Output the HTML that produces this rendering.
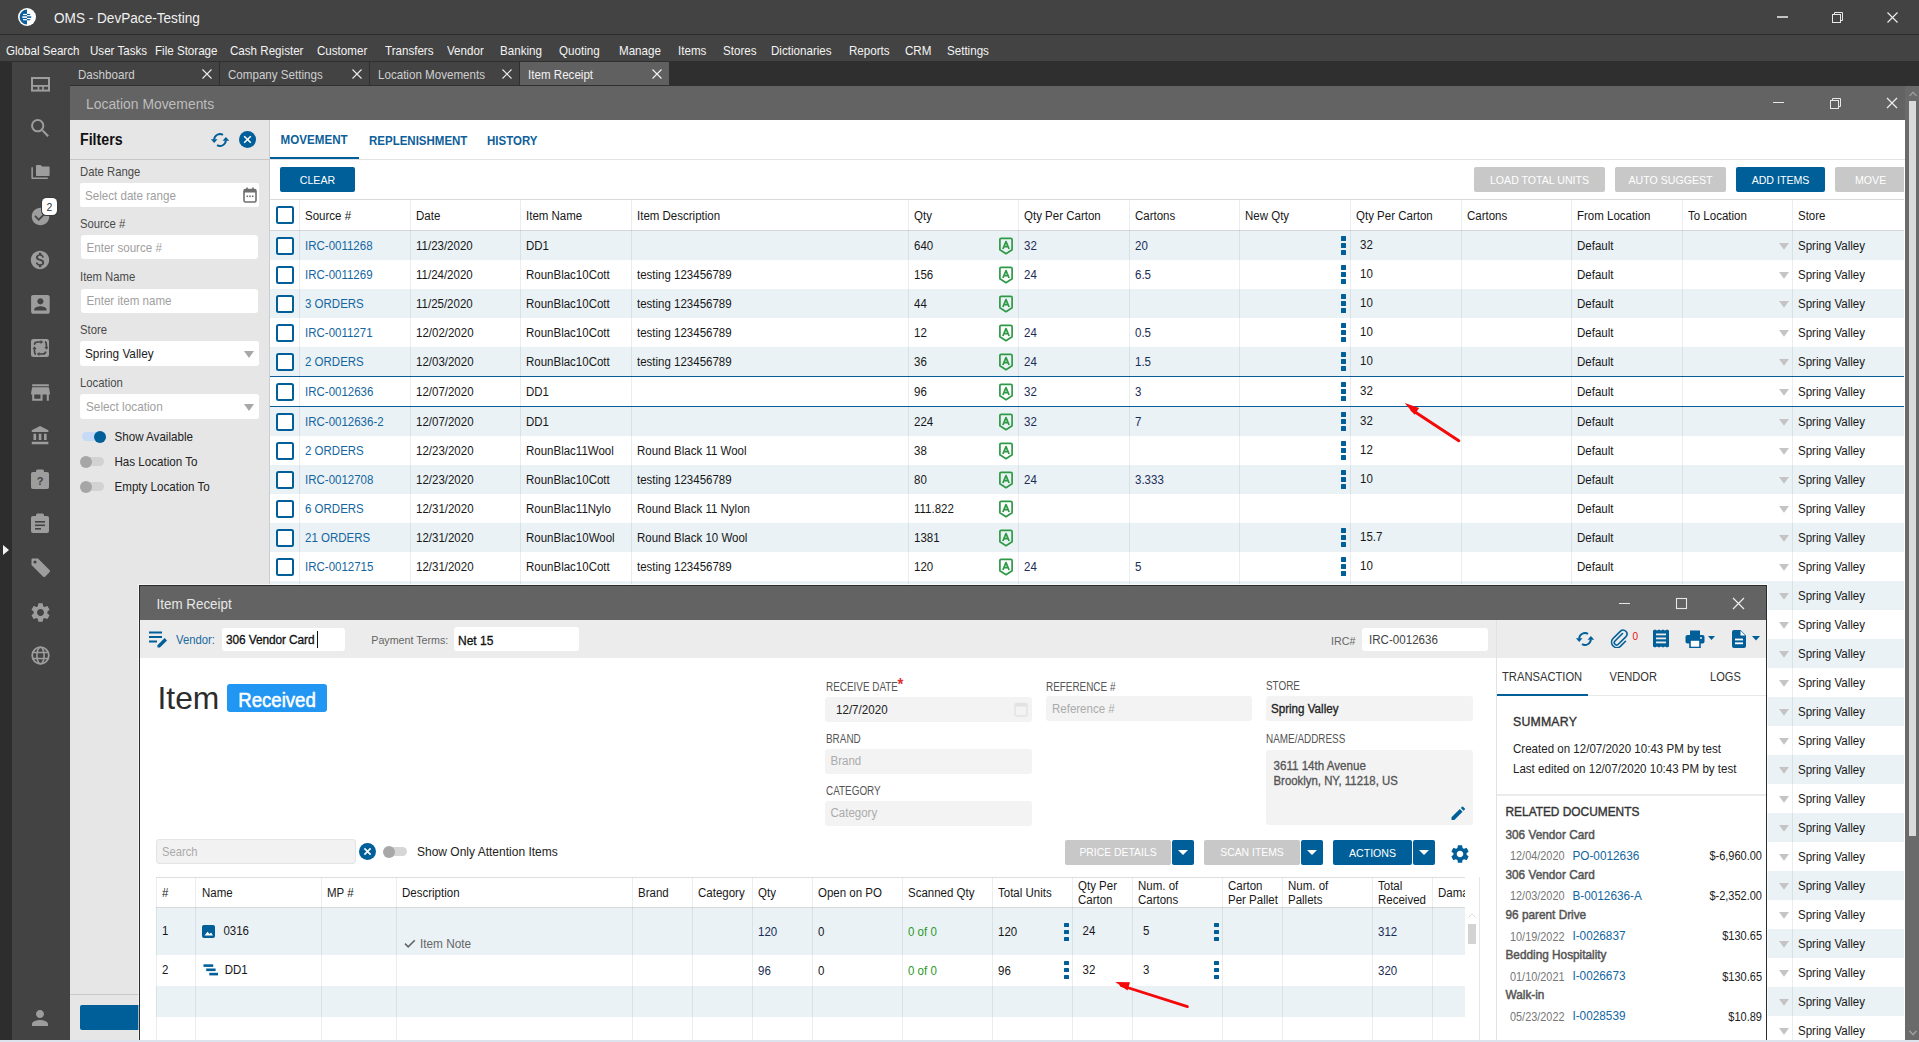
<!DOCTYPE html>
<html><head><meta charset="utf-8"><style>
html,body{margin:0;padding:0;}
body{width:1919px;height:1042px;position:relative;overflow:hidden;background:#2f2f2f;font-family:"Liberation Sans",sans-serif;}
body div{position:absolute;}
.t{white-space:nowrap;}
</style></head><body>
<div style="left:0px;top:0px;width:1919px;height:34px;background:#434343;"></div>
<div style="left:0px;top:34px;width:1919px;height:1px;background:#2c2c2c;"></div>
<div style="left:0px;top:35px;width:1919px;height:26px;background:#434343;"></div>
<div style="left:0px;top:61px;width:1919px;height:1px;background:#2f2f2f;"></div>
<svg style="position:absolute;left:18px;top:8px;" width="18" height="18" viewBox="0 0 18 18"><circle cx="9" cy="9" r="9" fill="#fff"/><path d="M9 1.6A7.4 7.4 0 0 0 9 16.4Z" fill="#0a5f9c"/><rect x="5" y="5.9" width="4" height="1.2" fill="#fff"/><rect x="4.3" y="8.3" width="4.7" height="1.6" fill="#fff"/><rect x="5" y="11.1" width="4" height="1.2" fill="#fff"/><rect x="9" y="5.9" width="3.2" height="1.2" fill="#0a5f9c"/><rect x="9" y="8.3" width="4.2" height="1.6" fill="#0a5f9c"/><rect x="9" y="11.1" width="3.2" height="1.2" fill="#0a5f9c"/></svg>
<div class="t" style="left:54px;top:12.09px;font-size:13.6px;line-height:13.6px;color:#f0f0f0;font-weight:400;transform:scaleY(1.1);transform-origin:0 11.51px;">OMS - DevPace-Testing</div>
<div style="left:1777px;top:16px;width:11px;height:2px;background:#c4c4c4;"></div>
<svg style="position:absolute;left:1831px;top:11px;" width="13" height="13" viewBox="0 0 13 13"><rect x="1.5" y="3.5" width="8" height="8" fill="none" stroke="#e8e8e8"/><path d="M3.5 3.5V1.5H11.5V9.5H9.5" fill="none" stroke="#e8e8e8"/></svg>
<svg style="position:absolute;left:1887px;top:12px;" width="11" height="11" viewBox="0 0 11 11"><path d="M0.5 0.5L10.5 10.5M10.5 0.5L0.5 10.5" stroke="#f0f0f0" stroke-width="1.1"/></svg>
<div class="t" style="left:6px;top:45.18px;font-size:11.6px;line-height:11.6px;color:#f4f4f4;font-weight:400;transform:scaleY(1.1);transform-origin:0 9.82px;">Global Search</div>
<div class="t" style="left:90px;top:45.18px;font-size:11.6px;line-height:11.6px;color:#f4f4f4;font-weight:400;transform:scaleY(1.1);transform-origin:0 9.82px;">User Tasks</div>
<div class="t" style="left:155px;top:45.18px;font-size:11.6px;line-height:11.6px;color:#f4f4f4;font-weight:400;transform:scaleY(1.1);transform-origin:0 9.82px;">File Storage</div>
<div class="t" style="left:230px;top:45.18px;font-size:11.6px;line-height:11.6px;color:#f4f4f4;font-weight:400;transform:scaleY(1.1);transform-origin:0 9.82px;">Cash Register</div>
<div class="t" style="left:317px;top:45.18px;font-size:11.6px;line-height:11.6px;color:#f4f4f4;font-weight:400;transform:scaleY(1.1);transform-origin:0 9.82px;">Customer</div>
<div class="t" style="left:385px;top:45.18px;font-size:11.6px;line-height:11.6px;color:#f4f4f4;font-weight:400;transform:scaleY(1.1);transform-origin:0 9.82px;">Transfers</div>
<div class="t" style="left:447px;top:45.18px;font-size:11.6px;line-height:11.6px;color:#f4f4f4;font-weight:400;transform:scaleY(1.1);transform-origin:0 9.82px;">Vendor</div>
<div class="t" style="left:500px;top:45.18px;font-size:11.6px;line-height:11.6px;color:#f4f4f4;font-weight:400;transform:scaleY(1.1);transform-origin:0 9.82px;">Banking</div>
<div class="t" style="left:559px;top:45.18px;font-size:11.6px;line-height:11.6px;color:#f4f4f4;font-weight:400;transform:scaleY(1.1);transform-origin:0 9.82px;">Quoting</div>
<div class="t" style="left:619px;top:45.18px;font-size:11.6px;line-height:11.6px;color:#f4f4f4;font-weight:400;transform:scaleY(1.1);transform-origin:0 9.82px;">Manage</div>
<div class="t" style="left:678px;top:45.18px;font-size:11.6px;line-height:11.6px;color:#f4f4f4;font-weight:400;transform:scaleY(1.1);transform-origin:0 9.82px;">Items</div>
<div class="t" style="left:723px;top:45.18px;font-size:11.6px;line-height:11.6px;color:#f4f4f4;font-weight:400;transform:scaleY(1.1);transform-origin:0 9.82px;">Stores</div>
<div class="t" style="left:771px;top:45.18px;font-size:11.6px;line-height:11.6px;color:#f4f4f4;font-weight:400;transform:scaleY(1.1);transform-origin:0 9.82px;">Dictionaries</div>
<div class="t" style="left:849px;top:45.18px;font-size:11.6px;line-height:11.6px;color:#f4f4f4;font-weight:400;transform:scaleY(1.1);transform-origin:0 9.82px;">Reports</div>
<div class="t" style="left:905px;top:45.18px;font-size:11.6px;line-height:11.6px;color:#f4f4f4;font-weight:400;transform:scaleY(1.1);transform-origin:0 9.82px;">CRM</div>
<div class="t" style="left:947px;top:45.18px;font-size:11.6px;line-height:11.6px;color:#f4f4f4;font-weight:400;transform:scaleY(1.1);transform-origin:0 9.82px;">Settings</div>
<div style="left:0px;top:62px;width:12px;height:978px;background:#2d2d2d;"></div>
<div style="left:12px;top:62px;width:58px;height:978px;background:#434343;"></div>
<svg style="position:absolute;left:3px;top:545px;" width="6" height="10" viewBox="0 0 6 10"><path d="M0 0L6 5L0 10Z" fill="#f2f2f2"/></svg>
<svg style="position:absolute;left:31px;top:77px;" width="19" height="15" viewBox="0 0 19 15"><rect x="1" y="1" width="17" height="12.6" fill="none" stroke="#9d9d9d" stroke-width="2"/><rect x="1" y="8" width="17" height="1.8" fill="#9d9d9d"/><rect x="6.6" y="8" width="1.7" height="6" fill="#9d9d9d"/><rect x="11.2" y="8" width="1.7" height="6" fill="#9d9d9d"/></svg>
<svg style="position:absolute;left:28.4px;top:115.7px;" width="24.5" height="24.5" viewBox="0 0 24 24"><path d="M15.5 14h-.79l-.28-.27A6.471 6.471 0 0 0 16 9.5 6.5 6.5 0 1 0 9.5 16c1.61 0 3.09-.59 4.23-1.57l.27.28v.79l5 4.99L20.49 19l-4.99-5zm-6 0C7.01 14 5 11.99 5 9.5S7.01 5 9.5 5 14 7.01 14 9.5 11.99 14 9.5 14z" fill="#9d9d9d"/></svg>
<svg style="position:absolute;left:31px;top:164px;" width="19" height="16" viewBox="0 0 19 16"><path d="M5.8 1H9.6L11.1 2.5H17.8Q18.6 2.5 18.6 3.3V11.2Q18.6 12 17.8 12H5.8Q5 12 5 11.2V1.8Q5 1 5.8 1Z" fill="#9d9d9d"/><path d="M0.4 3.2H1.9V13.5H16.8V15H1.2Q0.4 15 0.4 14.2Z" fill="#9d9d9d"/></svg>
<svg style="position:absolute;left:29.5px;top:205.5px;" width="21" height="21" viewBox="0 0 24 24"><path d="M12 2C6.48 2 2 6.48 2 12s4.48 10 10 10 10-4.48 10-10S17.52 2 12 2zm-2 15l-5-5 1.41-1.41L10 14.17l7.59-7.59L19 8l-9 9z" fill="#9d9d9d"/></svg>
<div style="left:42px;top:198px;width:15px;height:17px;background:#fff;border-radius:4.5px;box-shadow:0 0 0 1px #3a3a3a;"></div>
<div class="t" style="left:-150.5px;width:400px;text-align:center;top:201.61px;font-size:10.5px;line-height:10.5px;color:#333;font-weight:400;transform:scaleY(1.1);transform-origin:0 8.89px;">2</div>
<svg style="position:absolute;left:29.0px;top:249.0px;" width="22" height="22" viewBox="0 0 24 24"><path d="M12 2C6.48 2 2 6.48 2 12s4.48 10 10 10 10-4.48 10-10S17.52 2 12 2zm1.41 16.09V20h-2.67v-1.93c-1.71-.36-3.16-1.46-3.27-3.4h1.96c.1 1.05.82 1.87 2.65 1.870 1.96 0 2.4-.98 2.4-1.59 0-.83-.44-1.61-2.67-2.14-2.48-.6-4.18-1.62-4.18-3.670 0-1.72 1.39-2.84 3.11-3.21V4h2.67v1.95c1.86.45 2.790 1.86 2.85 3.39H14.3c-.05-1.11-.64-1.87-2.22-1.870-1.5 0-2.4.68-2.4 1.64 0 .84.65 1.390 2.67 1.91s4.18 1.39 4.18 3.91c-.01 1.83-1.38 2.83-3.12 3.16z" fill="#9d9d9d"/></svg>
<svg style="position:absolute;left:27.6px;top:291.6px;" width="24.8" height="24.8" viewBox="0 0 24 24"><path d="M3 5v14c0 1.1.89 2 2 2h14c1.1 0 2-.9 2-2V5c0-1.1-.9-2-2-2H5c-1.11 0-2 .9-2 2zm12 4c0 1.66-1.34 3-3 3s-3-1.34-3-3 1.34-3 3-3 3 1.34 3 3zm-9 8c0-2 4-3.1 6-3.1s6 1.1 6 3.1v1H6v-1z" fill="#9d9d9d"/></svg>
<svg style="position:absolute;left:31px;top:339px;" width="18" height="18" viewBox="0 0 18 18"><rect x="0" y="0" width="18" height="18" rx="2.5" fill="#9d9d9d"/><g fill="none" stroke="#434343" stroke-width="1.7"><path d="M3.5 5.8Q3.5 3 6.5 3H9.8"/><path d="M14 2.6Q15.4 3.2 15.4 6V8.2"/><path d="M14.6 12.5Q14.6 15 11.6 15H8.3"/><path d="M4.8 15.4Q3.5 14.8 3.5 12V9.8"/></g><g fill="#434343"><path d="M9.5 1L9.5 5L12.3 3Z"/><path d="M13.4 8L17.4 8L15.4 10.8Z"/><path d="M8.5 13L8.5 17L5.7 15Z"/><path d="M1.5 10L5.5 10L3.5 7.2Z"/></g></svg>
<svg style="position:absolute;left:27.5px;top:379.5px;" width="25" height="25" viewBox="0 0 24 24"><path d="M20 4H4v2h16V4zm1 10v-2l-1-5H4l-1 5v2h1v6h10v-6h4v6h2v-6h1zm-9 4H6v-4h6v4z" fill="#9d9d9d"/></svg>
<svg style="position:absolute;left:29.5px;top:424.5px;" width="21" height="21" viewBox="0 0 24 24"><path d="M4 10v7h3v-7H4zm6 0v7h3v-7h-3zM2 22h19v-3H2v3zm14-12v7h3v-7h-3zm-4.5-9L2 6v2h19V6l-9.5-5z" fill="#9d9d9d"/></svg>
<svg style="position:absolute;left:31px;top:469px;" width="18" height="20" viewBox="0 0 18 20"><rect x="0" y="3" width="18" height="17" rx="2" fill="#9d9d9d"/><rect x="5" y="0.5" width="8" height="5" rx="1.5" fill="#9d9d9d"/><text x="9" y="16" font-size="11" font-weight="bold" text-anchor="middle" fill="#434343" font-family="Liberation Sans">?</text></svg>
<svg style="position:absolute;left:31px;top:513px;" width="18" height="20" viewBox="0 0 18 20"><rect x="0" y="3" width="18" height="17" rx="2" fill="#9d9d9d"/><rect x="5" y="0.5" width="8" height="5" rx="1.5" fill="#9d9d9d"/><rect x="4" y="8" width="10" height="1.6" fill="#434343"/><rect x="4" y="11.5" width="10" height="1.6" fill="#434343"/><rect x="4" y="15" width="6" height="1.6" fill="#434343"/></svg>
<svg style="position:absolute;left:30px;top:557px;" width="21" height="21" viewBox="0 0 21 21"><path d="M8 1.5L19.5 13c.7.7.7 1.6 0 2.3l-4.2 4.2c-.7.7-1.6.7-2.3 0L1.5 8V2.5c0-.6.4-1 1-1z" fill="#9d9d9d"/><circle cx="5" cy="5" r="1.6" fill="#434343"/></svg>
<svg style="position:absolute;left:28.5px;top:600.5px;" width="23" height="23" viewBox="0 0 24 24"><path d="M19.14 12.94c.04-.3.06-.61.06-.94 0-.32-.02-.64-.07-.94l2.03-1.58c.18-.14.23-.41.12-.61l-1.92-3.32c-.12-.22-.37-.29-.59-.22l-2.39.96c-.5-.38-1.03-.7-1.62-.94l-.36-2.540c-.04-.24-.24-.41-.48-.41h-3.84c-.24 0-.43.17-.47.41l-.36 2.54c-.59.24-1.13.57-1.62.94l-2.39-.96c-.22-.08-.47 0-.59.22L2.74 8.870c-.12.21-.08.47.12.61l2.03 1.58c-.05.3-.09.63-.09.94s.02.64.07.94l-2.03 1.58c-.18.14-.23.41-.12.61l1.920 3.32c.12.22.37.29.59.22l2.39-.96c.5.38 1.03.7 1.62.94l.36 2.54c.05.24.24.41.48.41h3.84c.24 0 .44-.17.47-.41l.36-2.54c.59-.24 1.13-.56 1.62-.94l2.39.96c.22.08.47 0 .59-.22l1.92-3.32c.12-.22.07-.47-.12-.61l-2.01-1.58zM12 15.6c-1.98 0-3.6-1.62-3.6-3.6s1.62-3.6 3.6-3.6 3.6 1.62 3.6 3.6-1.62 3.6-3.6 3.6z" fill="#9d9d9d"/></svg>
<svg style="position:absolute;left:31px;top:646px;" width="19" height="19" viewBox="0 0 19 19"><circle cx="9.5" cy="9.5" r="8.3" fill="none" stroke="#9d9d9d" stroke-width="1.8"/><ellipse cx="9.5" cy="9.5" rx="3.6" ry="8.3" fill="none" stroke="#9d9d9d" stroke-width="1.6"/><path d="M1.5 6.5h16M1.5 12.5h16" stroke="#9d9d9d" stroke-width="1.6"/></svg>
<svg style="position:absolute;left:28.0px;top:1005.5px;" width="24" height="24" viewBox="0 0 24 24"><path d="M12 12c2.21 0 4-1.79 4-4s-1.79-4-4-4-4 1.79-4 4 1.790 4 4 4zm0 2c-2.67 0-8 1.34-8 4v2h16v-2c0-2.66-5.33-4-8-4z" fill="#9d9d9d"/></svg>
<div style="left:70px;top:62px;width:1849px;height:23px;background:#2f2f2f;"></div>
<div style="left:70px;top:62px;width:149px;height:23px;background:#434343;"></div>
<div class="t" style="left:78px;top:69.18px;font-size:11.6px;line-height:11.6px;color:#cfcfcf;font-weight:400;transform:scaleY(1.1);transform-origin:0 9.82px;">Dashboard</div>
<svg style="position:absolute;left:202px;top:69px;" width="10" height="10" viewBox="0 0 10 10"><path d="M0.5 0.5L9.5 9.5M9.5 0.5L0.5 9.5" stroke="#ececec" stroke-width="1.1"/></svg>
<div style="left:220px;top:62px;width:149px;height:23px;background:#434343;"></div>
<div class="t" style="left:228px;top:69.18px;font-size:11.6px;line-height:11.6px;color:#cfcfcf;font-weight:400;transform:scaleY(1.1);transform-origin:0 9.82px;">Company Settings</div>
<svg style="position:absolute;left:352px;top:69px;" width="10" height="10" viewBox="0 0 10 10"><path d="M0.5 0.5L9.5 9.5M9.5 0.5L0.5 9.5" stroke="#ececec" stroke-width="1.1"/></svg>
<div style="left:370px;top:62px;width:149px;height:23px;background:#434343;"></div>
<div class="t" style="left:378px;top:69.18px;font-size:11.6px;line-height:11.6px;color:#cfcfcf;font-weight:400;transform:scaleY(1.1);transform-origin:0 9.82px;">Location Movements</div>
<svg style="position:absolute;left:502px;top:69px;" width="10" height="10" viewBox="0 0 10 10"><path d="M0.5 0.5L9.5 9.5M9.5 0.5L0.5 9.5" stroke="#ececec" stroke-width="1.1"/></svg>
<div style="left:520px;top:62px;width:149px;height:23px;background:#606060;"></div>
<div class="t" style="left:528px;top:69.18px;font-size:11.6px;line-height:11.6px;color:#f2f2f2;font-weight:400;transform:scaleY(1.1);transform-origin:0 9.82px;">Item Receipt</div>
<svg style="position:absolute;left:652px;top:69px;" width="10" height="10" viewBox="0 0 10 10"><path d="M0.5 0.5L9.5 9.5M9.5 0.5L0.5 9.5" stroke="#f4f4f4" stroke-width="1.1"/></svg>
<div style="left:70px;top:85px;width:1849px;height:1px;background:#2f2f2f;"></div>
<div style="left:70px;top:86px;width:1835px;height:34px;background:#636363;"></div>
<div class="t" style="left:86px;top:97.73px;font-size:13.9px;line-height:13.9px;color:#bdbdbd;font-weight:400;transform:scaleY(1.1);transform-origin:0 11.77px;">Location Movements</div>
<div style="left:1773px;top:102px;width:11px;height:1px;background:#e8e8e8;"></div>
<svg style="position:absolute;left:1829px;top:97px;" width="13" height="13" viewBox="0 0 13 13"><rect x="1.5" y="3.5" width="8" height="8" fill="none" stroke="#e8e8e8"/><path d="M3.5 3.5V1.5H11.5V9.5H9.5" fill="none" stroke="#e8e8e8"/></svg>
<svg style="position:absolute;left:1886px;top:97px;" width="12" height="12" viewBox="0 0 12 12"><path d="M1 1L11 11M11 1L1 11" stroke="#f0f0f0" stroke-width="1.2"/></svg>
<div style="left:1905px;top:86px;width:14px;height:954px;background:#6a6a6a;"></div>
<div style="left:1909px;top:101px;width:7px;height:735px;background:#dadada;"></div>
<svg style="position:absolute;left:1908.5px;top:90.5px;" width="8" height="6" viewBox="0 0 8 6"><path d="M0.5 5L4 1.2L7.5 5" fill="none" stroke="#9c9c9c" stroke-width="1.3"/></svg>
<svg style="position:absolute;left:1908.5px;top:1029.5px;" width="8" height="6" viewBox="0 0 8 6"><path d="M0.5 0.8L4 4.6L7.5 0.8" fill="none" stroke="#a0a0a0" stroke-width="1.4"/></svg>
<div style="left:0px;top:1040px;width:1919px;height:2px;background:#dde3ec;"></div>
<div style="left:70px;top:120px;width:199px;height:920px;background:#e6e6e6;"></div>
<div style="left:269px;top:120px;width:1px;height:920px;background:#cdcdcd;"></div>
<div class="t" style="left:80px;top:132.98px;font-size:14.2px;line-height:14.2px;color:#111;font-weight:700;transform:scaleY(1.1);transform-origin:0 12.02px;">Filters</div>
<svg style="position:absolute;left:209.5px;top:129.5px;" width="20" height="20" viewBox="0 0 20 20"><path d="M13 4.8A6 6 0 0 0 4.1 9.6" fill="none" stroke="#005f99" stroke-width="1.9"/><path d="M0.9 9.3H7.5L4.2 12.9Z" fill="#005f99"/><path d="M7 15.2A6 6 0 0 0 15.9 10.4" fill="none" stroke="#005f99" stroke-width="1.9"/><path d="M12.6 10.7H19.2L15.9 7.1Z" fill="#005f99"/></svg>
<svg style="position:absolute;left:239px;top:131px;" width="17" height="17" viewBox="0 0 17 17"><circle cx="8.5" cy="8.5" r="8.5" fill="#005f99"/><path d="M5.2 5.2L11.8 11.8M11.8 5.2L5.2 11.8" stroke="#fff" stroke-width="1.6"/></svg>
<div style="left:70px;top:159px;width:199px;height:1px;background:#c6c6c6;"></div>
<div class="t" style="left:80px;top:166.83px;font-size:11.3px;line-height:11.3px;color:#4a4a4a;font-weight:400;transform:scaleY(1.1);transform-origin:0 9.57px;">Date Range</div>
<div style="left:80px;top:183px;width:179px;height:24px;background:#fff;border-radius:2px;"></div>
<div class="t" style="left:85px;top:190.18px;font-size:11.6px;line-height:11.6px;color:#a0a0a0;font-weight:400;transform:scaleY(1.1);transform-origin:0 9.82px;">Select date range</div>
<svg style="position:absolute;left:243px;top:187px;" width="14" height="16" viewBox="0 0 14 16"><rect x="1" y="2.5" width="12" height="12.5" rx="1.5" fill="none" stroke="#6f6f6f" stroke-width="1.6"/><rect x="1" y="2.5" width="12" height="3" fill="#6f6f6f"/><rect x="3.2" y="0.5" width="1.6" height="3" fill="#6f6f6f"/><rect x="9.2" y="0.5" width="1.6" height="3" fill="#6f6f6f"/><rect x="3.5" y="8.5" width="1.6" height="1.6" fill="#6f6f6f"/><rect x="6.2" y="8.5" width="1.6" height="1.6" fill="#6f6f6f"/><rect x="8.9" y="8.5" width="1.6" height="1.6" fill="#6f6f6f"/></svg>
<div class="t" style="left:80px;top:219.43px;font-size:11.3px;line-height:11.3px;color:#4a4a4a;font-weight:400;transform:scaleY(1.1);transform-origin:0 9.57px;">Source #</div>
<div style="left:81px;top:235px;width:177px;height:24px;background:#fff;border-radius:3px;"></div>
<div class="t" style="left:86.5px;top:242.18px;font-size:11.6px;line-height:11.6px;color:#a0a0a0;font-weight:400;transform:scaleY(1.1);transform-origin:0 9.82px;">Enter source #</div>
<div class="t" style="left:80px;top:271.93px;font-size:11.3px;line-height:11.3px;color:#4a4a4a;font-weight:400;transform:scaleY(1.1);transform-origin:0 9.57px;">Item Name</div>
<div style="left:81px;top:289px;width:177px;height:24px;background:#fff;border-radius:3px;"></div>
<div class="t" style="left:86.5px;top:295.18px;font-size:11.6px;line-height:11.6px;color:#a0a0a0;font-weight:400;transform:scaleY(1.1);transform-origin:0 9.82px;">Enter item name</div>
<div class="t" style="left:80px;top:325.03px;font-size:11.3px;line-height:11.3px;color:#4a4a4a;font-weight:400;transform:scaleY(1.1);transform-origin:0 9.57px;">Store</div>
<div style="left:80px;top:341px;width:179px;height:25px;background:#fff;border-radius:3px;"></div>
<div class="t" style="left:85px;top:349.01px;font-size:11.8px;line-height:11.8px;color:#222;font-weight:400;transform:scaleY(1.1);transform-origin:0 9.99px;">Spring Valley</div>
<svg style="position:absolute;left:244px;top:351px;" width="10" height="7" viewBox="0 0 10 7"><path d="M0 0H10L5 7Z" fill="#a8a8a8"/></svg>
<div class="t" style="left:80px;top:378.43px;font-size:11.3px;line-height:11.3px;color:#4a4a4a;font-weight:400;transform:scaleY(1.1);transform-origin:0 9.57px;">Location</div>
<div style="left:80px;top:394px;width:179px;height:25px;background:#fff;border-radius:3px;"></div>
<div class="t" style="left:86px;top:402.01px;font-size:11.8px;line-height:11.8px;color:#a0a0a0;font-weight:400;transform:scaleY(1.1);transform-origin:0 9.99px;">Select location</div>
<svg style="position:absolute;left:244px;top:404px;" width="10" height="7" viewBox="0 0 10 7"><path d="M0 0H10L5 7Z" fill="#a8a8a8"/></svg>
<div style="left:82px;top:432px;width:24px;height:9px;background:#c6d9f6;border-radius:5px;"></div>
<div style="left:94px;top:430.5px;width:12px;height:12px;background:#005f99;border-radius:6px;"></div>
<div class="t" style="left:114.5px;top:430.88px;font-size:11.6px;line-height:11.6px;color:#222;font-weight:400;transform:scaleY(1.1);transform-origin:0 9.82px;">Show Available</div>
<div style="left:82px;top:457.0px;width:22px;height:9px;background:#d2d2d2;border-radius:5px;"></div>
<div style="left:80px;top:455.5px;width:12px;height:12px;background:#a6a6a6;border-radius:6px;"></div>
<div class="t" style="left:114.5px;top:455.88px;font-size:11.6px;line-height:11.6px;color:#222;font-weight:400;transform:scaleY(1.1);transform-origin:0 9.82px;">Has Location To</div>
<div style="left:82px;top:482.0px;width:22px;height:9px;background:#d2d2d2;border-radius:5px;"></div>
<div style="left:80px;top:480.5px;width:12px;height:12px;background:#a6a6a6;border-radius:6px;"></div>
<div class="t" style="left:114.5px;top:480.88px;font-size:11.6px;line-height:11.6px;color:#222;font-weight:400;transform:scaleY(1.1);transform-origin:0 9.82px;">Empty Location To</div>
<div style="left:70px;top:994px;width:199px;height:1px;background:#c8c8c8;"></div>
<div style="left:80px;top:1005px;width:80px;height:25px;background:#005f99;border-radius:2px;"></div>
<div style="left:270px;top:120px;width:1635px;height:920px;background:#fff;"></div>
<div class="t" style="left:280.6px;top:134.38px;font-size:11.6px;line-height:11.6px;color:#0e5f9a;font-weight:700;transform:scaleY(1.1);transform-origin:0 9.82px;">MOVEMENT</div>
<div class="t" style="left:369px;top:135.77px;font-size:11.5px;line-height:11.5px;color:#0e5f9a;font-weight:700;transform:scaleY(1.1);transform-origin:0 9.73px;">REPLENISHMENT</div>
<div class="t" style="left:487px;top:135.77px;font-size:11.5px;line-height:11.5px;color:#0e5f9a;font-weight:700;transform:scaleY(1.1);transform-origin:0 9.73px;">HISTORY</div>
<div style="left:270px;top:157px;width:89px;height:2px;background:#005f99;"></div>
<div style="left:270px;top:159px;width:1635px;height:1px;background:#e3e3e3;"></div>
<div style="left:280px;top:167px;width:75px;height:25px;background:#005f99;border-radius:2px;"></div>
<div class="t" style="left:117.5px;width:400px;text-align:center;top:175.03px;font-size:10.6px;line-height:10.6px;color:#fff;font-weight:400;transform:scaleY(1.1);transform-origin:0 8.97px;">CLEAR</div>
<div style="left:1474px;top:167px;width:131px;height:25px;background:#c8c8c8;border-radius:2px;"></div>
<div class="t" style="left:1339.5px;width:400px;text-align:center;top:175.03px;font-size:10.6px;line-height:10.6px;color:#fff;font-weight:400;transform:scaleY(1.1);transform-origin:0 8.97px;">LOAD TOTAL UNITS</div>
<div style="left:1615px;top:167px;width:111px;height:25px;background:#c8c8c8;border-radius:2px;"></div>
<div class="t" style="left:1470.5px;width:400px;text-align:center;top:175.03px;font-size:10.6px;line-height:10.6px;color:#fff;font-weight:400;transform:scaleY(1.1);transform-origin:0 8.97px;">AUTO SUGGEST</div>
<div style="left:1736px;top:167px;width:89px;height:25px;background:#005f99;border-radius:2px;"></div>
<div class="t" style="left:1580.5px;width:400px;text-align:center;top:175.03px;font-size:10.6px;line-height:10.6px;color:#fff;font-weight:400;transform:scaleY(1.1);transform-origin:0 8.97px;">ADD ITEMS</div>
<div style="left:1835px;top:167px;width:69px;height:25px;background:#c8c8c8;border-radius:2px 0 0 2px;"></div>
<div class="t" style="left:1855px;top:175.03px;font-size:10.6px;line-height:10.6px;color:#fff;font-weight:400;transform:scaleY(1.1);transform-origin:0 8.97px;">MOVE</div>
<div style="left:270px;top:199px;width:1634px;height:1px;background:#dadada;"></div>
<div style="left:270px;top:230px;width:1634px;height:1px;background:#d6d6d6;"></div>
<div style="left:270px;top:231px;width:1634px;height:29px;background:#eaf2f6;"></div>
<div style="left:270px;top:289px;width:1634px;height:29px;background:#eaf2f6;"></div>
<div style="left:270px;top:347px;width:1634px;height:29px;background:#eaf2f6;"></div>
<div style="left:270px;top:407px;width:1634px;height:29px;background:#eaf2f6;"></div>
<div style="left:270px;top:465px;width:1634px;height:29px;background:#eaf2f6;"></div>
<div style="left:270px;top:523px;width:1634px;height:29px;background:#eaf2f6;"></div>
<div style="left:270px;top:581px;width:1634px;height:29px;background:#eaf2f6;"></div>
<div style="left:270px;top:639px;width:1634px;height:29px;background:#eaf2f6;"></div>
<div style="left:270px;top:697px;width:1634px;height:29px;background:#eaf2f6;"></div>
<div style="left:270px;top:755px;width:1634px;height:29px;background:#eaf2f6;"></div>
<div style="left:270px;top:813px;width:1634px;height:29px;background:#eaf2f6;"></div>
<div style="left:270px;top:871px;width:1634px;height:29px;background:#eaf2f6;"></div>
<div style="left:270px;top:929px;width:1634px;height:29px;background:#eaf2f6;"></div>
<div style="left:270px;top:987px;width:1634px;height:29px;background:#eaf2f6;"></div>
<div style="left:270px;top:376px;width:1634px;height:1px;background:#085e99;"></div>
<div style="left:270px;top:406px;width:1634px;height:1px;background:#085e99;"></div>
<div style="left:299px;top:200px;width:1px;height:840px;background:rgba(0,20,40,0.075);"></div>
<div style="left:410px;top:200px;width:1px;height:840px;background:rgba(0,20,40,0.075);"></div>
<div style="left:520px;top:200px;width:1px;height:840px;background:rgba(0,20,40,0.075);"></div>
<div style="left:631px;top:200px;width:1px;height:840px;background:rgba(0,20,40,0.075);"></div>
<div style="left:908px;top:200px;width:1px;height:840px;background:rgba(0,20,40,0.075);"></div>
<div style="left:1018px;top:200px;width:1px;height:840px;background:rgba(0,20,40,0.075);"></div>
<div style="left:1129px;top:200px;width:1px;height:840px;background:rgba(0,20,40,0.075);"></div>
<div style="left:1239px;top:200px;width:1px;height:840px;background:rgba(0,20,40,0.075);"></div>
<div style="left:1350px;top:200px;width:1px;height:840px;background:rgba(0,20,40,0.075);"></div>
<div style="left:1461px;top:200px;width:1px;height:840px;background:rgba(0,20,40,0.075);"></div>
<div style="left:1571px;top:200px;width:1px;height:840px;background:rgba(0,20,40,0.075);"></div>
<div style="left:1682px;top:200px;width:1px;height:840px;background:rgba(0,20,40,0.075);"></div>
<div style="left:1792px;top:200px;width:1px;height:840px;background:rgba(0,20,40,0.075);"></div>
<div style="left:276px;top:206px;width:14px;height:14px;border:2px solid #005f99;border-radius:2.5px;background:#fff;"></div>
<div class="t" style="left:305px;top:210.97px;font-size:11.5px;line-height:11.5px;color:#181818;font-weight:400;transform:scaleY(1.1);transform-origin:0 9.73px;">Source #</div>
<div class="t" style="left:416px;top:210.97px;font-size:11.5px;line-height:11.5px;color:#181818;font-weight:400;transform:scaleY(1.1);transform-origin:0 9.73px;">Date</div>
<div class="t" style="left:526px;top:210.97px;font-size:11.5px;line-height:11.5px;color:#181818;font-weight:400;transform:scaleY(1.1);transform-origin:0 9.73px;">Item Name</div>
<div class="t" style="left:637px;top:210.97px;font-size:11.5px;line-height:11.5px;color:#181818;font-weight:400;transform:scaleY(1.1);transform-origin:0 9.73px;">Item Description</div>
<div class="t" style="left:914px;top:210.97px;font-size:11.5px;line-height:11.5px;color:#181818;font-weight:400;transform:scaleY(1.1);transform-origin:0 9.73px;">Qty</div>
<div class="t" style="left:1024px;top:210.97px;font-size:11.5px;line-height:11.5px;color:#181818;font-weight:400;transform:scaleY(1.1);transform-origin:0 9.73px;">Qty Per Carton</div>
<div class="t" style="left:1135px;top:210.97px;font-size:11.5px;line-height:11.5px;color:#181818;font-weight:400;transform:scaleY(1.1);transform-origin:0 9.73px;">Cartons</div>
<div class="t" style="left:1245px;top:210.97px;font-size:11.5px;line-height:11.5px;color:#181818;font-weight:400;transform:scaleY(1.1);transform-origin:0 9.73px;">New Qty</div>
<div class="t" style="left:1356px;top:210.97px;font-size:11.5px;line-height:11.5px;color:#181818;font-weight:400;transform:scaleY(1.1);transform-origin:0 9.73px;">Qty Per Carton</div>
<div class="t" style="left:1467px;top:210.97px;font-size:11.5px;line-height:11.5px;color:#181818;font-weight:400;transform:scaleY(1.1);transform-origin:0 9.73px;">Cartons</div>
<div class="t" style="left:1577px;top:210.97px;font-size:11.5px;line-height:11.5px;color:#181818;font-weight:400;transform:scaleY(1.1);transform-origin:0 9.73px;">From Location</div>
<div class="t" style="left:1688px;top:210.97px;font-size:11.5px;line-height:11.5px;color:#181818;font-weight:400;transform:scaleY(1.1);transform-origin:0 9.73px;">To Location</div>
<div class="t" style="left:1798px;top:210.97px;font-size:11.5px;line-height:11.5px;color:#181818;font-weight:400;transform:scaleY(1.1);transform-origin:0 9.73px;">Store</div>
<div style="left:276px;top:237px;width:14px;height:14px;border:2px solid #005f99;border-radius:2.5px;background:#fff;"></div>
<div class="t" style="left:305px;top:240.87px;font-size:11.5px;line-height:11.5px;color:#1466a0;font-weight:400;transform:scaleY(1.1);transform-origin:0 9.73px;">IRC-0011268</div>
<div class="t" style="left:416px;top:240.87px;font-size:11.5px;line-height:11.5px;color:#181818;font-weight:400;transform:scaleY(1.1);transform-origin:0 9.73px;">11/23/2020</div>
<div class="t" style="left:526px;top:240.87px;font-size:11.5px;line-height:11.5px;color:#181818;font-weight:400;transform:scaleY(1.1);transform-origin:0 9.73px;">DD1</div>
<div class="t" style="left:637px;top:240.87px;font-size:11.5px;line-height:11.5px;color:#181818;font-weight:400;transform:scaleY(1.1);transform-origin:0 9.73px;"></div>
<div class="t" style="left:914px;top:240.87px;font-size:11.5px;line-height:11.5px;color:#181818;font-weight:400;transform:scaleY(1.1);transform-origin:0 9.73px;">640</div>
<svg style="position:absolute;left:998px;top:236.5px;" width="16" height="18" viewBox="0 0 16 18"><path d="M1.9 2.6Q1.9 1.3 3.2 1.3H12.8Q14.1 1.3 14.1 2.6V12.7L8 16.7L1.9 12.7Z" fill="none" stroke="#2f9a45" stroke-width="1.7" stroke-linejoin="round"/><path d="M4.9 12L8 4.6L11.1 12M6 9.6H10" fill="none" stroke="#2f9a45" stroke-width="1.75" stroke-linejoin="round"/></svg>
<div class="t" style="left:1024px;top:240.87px;font-size:11.5px;line-height:11.5px;color:#1a2d56;font-weight:400;transform:scaleY(1.1);transform-origin:0 9.73px;">32</div>
<div class="t" style="left:1135px;top:240.87px;font-size:11.5px;line-height:11.5px;color:#1a2d56;font-weight:400;transform:scaleY(1.1);transform-origin:0 9.73px;">20</div>
<div style="left:1341.3px;top:236.3px;width:4.5px;height:4.5px;background:#005f99;border-radius:0.5px;"></div>
<div style="left:1341.3px;top:243.3px;width:4.5px;height:4.5px;background:#005f99;border-radius:0.5px;"></div>
<div style="left:1341.3px;top:250.3px;width:4.5px;height:4.5px;background:#005f99;border-radius:0.5px;"></div>
<div class="t" style="left:1360px;top:239.57px;font-size:11.5px;line-height:11.5px;color:#181818;font-weight:400;transform:scaleY(1.1);transform-origin:0 9.73px;">32</div>
<div class="t" style="left:1577px;top:240.87px;font-size:11.5px;line-height:11.5px;color:#181818;font-weight:400;transform:scaleY(1.1);transform-origin:0 9.73px;">Default</div>
<div style="left:276px;top:266px;width:14px;height:14px;border:2px solid #005f99;border-radius:2.5px;background:#fff;"></div>
<div class="t" style="left:305px;top:269.87px;font-size:11.5px;line-height:11.5px;color:#1466a0;font-weight:400;transform:scaleY(1.1);transform-origin:0 9.73px;">IRC-0011269</div>
<div class="t" style="left:416px;top:269.87px;font-size:11.5px;line-height:11.5px;color:#181818;font-weight:400;transform:scaleY(1.1);transform-origin:0 9.73px;">11/24/2020</div>
<div class="t" style="left:526px;top:269.87px;font-size:11.5px;line-height:11.5px;color:#181818;font-weight:400;transform:scaleY(1.1);transform-origin:0 9.73px;">RounBlac10Cott</div>
<div class="t" style="left:637px;top:269.87px;font-size:11.5px;line-height:11.5px;color:#181818;font-weight:400;transform:scaleY(1.1);transform-origin:0 9.73px;">testing 123456789</div>
<div class="t" style="left:914px;top:269.87px;font-size:11.5px;line-height:11.5px;color:#181818;font-weight:400;transform:scaleY(1.1);transform-origin:0 9.73px;">156</div>
<svg style="position:absolute;left:998px;top:265.5px;" width="16" height="18" viewBox="0 0 16 18"><path d="M1.9 2.6Q1.9 1.3 3.2 1.3H12.8Q14.1 1.3 14.1 2.6V12.7L8 16.7L1.9 12.7Z" fill="none" stroke="#2f9a45" stroke-width="1.7" stroke-linejoin="round"/><path d="M4.9 12L8 4.6L11.1 12M6 9.6H10" fill="none" stroke="#2f9a45" stroke-width="1.75" stroke-linejoin="round"/></svg>
<div class="t" style="left:1024px;top:269.87px;font-size:11.5px;line-height:11.5px;color:#1a2d56;font-weight:400;transform:scaleY(1.1);transform-origin:0 9.73px;">24</div>
<div class="t" style="left:1135px;top:269.87px;font-size:11.5px;line-height:11.5px;color:#1a2d56;font-weight:400;transform:scaleY(1.1);transform-origin:0 9.73px;">6.5</div>
<div style="left:1341.3px;top:265.3px;width:4.5px;height:4.5px;background:#005f99;border-radius:0.5px;"></div>
<div style="left:1341.3px;top:272.3px;width:4.5px;height:4.5px;background:#005f99;border-radius:0.5px;"></div>
<div style="left:1341.3px;top:279.3px;width:4.5px;height:4.5px;background:#005f99;border-radius:0.5px;"></div>
<div class="t" style="left:1360px;top:268.57px;font-size:11.5px;line-height:11.5px;color:#181818;font-weight:400;transform:scaleY(1.1);transform-origin:0 9.73px;">10</div>
<div class="t" style="left:1577px;top:269.87px;font-size:11.5px;line-height:11.5px;color:#181818;font-weight:400;transform:scaleY(1.1);transform-origin:0 9.73px;">Default</div>
<div style="left:276px;top:295px;width:14px;height:14px;border:2px solid #005f99;border-radius:2.5px;background:#fff;"></div>
<div class="t" style="left:305px;top:298.87px;font-size:11.5px;line-height:11.5px;color:#1466a0;font-weight:400;transform:scaleY(1.1);transform-origin:0 9.73px;">3 ORDERS</div>
<div class="t" style="left:416px;top:298.87px;font-size:11.5px;line-height:11.5px;color:#181818;font-weight:400;transform:scaleY(1.1);transform-origin:0 9.73px;">11/25/2020</div>
<div class="t" style="left:526px;top:298.87px;font-size:11.5px;line-height:11.5px;color:#181818;font-weight:400;transform:scaleY(1.1);transform-origin:0 9.73px;">RounBlac10Cott</div>
<div class="t" style="left:637px;top:298.87px;font-size:11.5px;line-height:11.5px;color:#181818;font-weight:400;transform:scaleY(1.1);transform-origin:0 9.73px;">testing 123456789</div>
<div class="t" style="left:914px;top:298.87px;font-size:11.5px;line-height:11.5px;color:#181818;font-weight:400;transform:scaleY(1.1);transform-origin:0 9.73px;">44</div>
<svg style="position:absolute;left:998px;top:294.5px;" width="16" height="18" viewBox="0 0 16 18"><path d="M1.9 2.6Q1.9 1.3 3.2 1.3H12.8Q14.1 1.3 14.1 2.6V12.7L8 16.7L1.9 12.7Z" fill="none" stroke="#2f9a45" stroke-width="1.7" stroke-linejoin="round"/><path d="M4.9 12L8 4.6L11.1 12M6 9.6H10" fill="none" stroke="#2f9a45" stroke-width="1.75" stroke-linejoin="round"/></svg>
<div class="t" style="left:1024px;top:298.87px;font-size:11.5px;line-height:11.5px;color:#1a2d56;font-weight:400;transform:scaleY(1.1);transform-origin:0 9.73px;"></div>
<div class="t" style="left:1135px;top:298.87px;font-size:11.5px;line-height:11.5px;color:#1a2d56;font-weight:400;transform:scaleY(1.1);transform-origin:0 9.73px;"></div>
<div style="left:1341.3px;top:294.3px;width:4.5px;height:4.5px;background:#005f99;border-radius:0.5px;"></div>
<div style="left:1341.3px;top:301.3px;width:4.5px;height:4.5px;background:#005f99;border-radius:0.5px;"></div>
<div style="left:1341.3px;top:308.3px;width:4.5px;height:4.5px;background:#005f99;border-radius:0.5px;"></div>
<div class="t" style="left:1360px;top:297.57px;font-size:11.5px;line-height:11.5px;color:#181818;font-weight:400;transform:scaleY(1.1);transform-origin:0 9.73px;">10</div>
<div class="t" style="left:1577px;top:298.87px;font-size:11.5px;line-height:11.5px;color:#181818;font-weight:400;transform:scaleY(1.1);transform-origin:0 9.73px;">Default</div>
<div style="left:276px;top:324px;width:14px;height:14px;border:2px solid #005f99;border-radius:2.5px;background:#fff;"></div>
<div class="t" style="left:305px;top:327.87px;font-size:11.5px;line-height:11.5px;color:#1466a0;font-weight:400;transform:scaleY(1.1);transform-origin:0 9.73px;">IRC-0011271</div>
<div class="t" style="left:416px;top:327.87px;font-size:11.5px;line-height:11.5px;color:#181818;font-weight:400;transform:scaleY(1.1);transform-origin:0 9.73px;">12/02/2020</div>
<div class="t" style="left:526px;top:327.87px;font-size:11.5px;line-height:11.5px;color:#181818;font-weight:400;transform:scaleY(1.1);transform-origin:0 9.73px;">RounBlac10Cott</div>
<div class="t" style="left:637px;top:327.87px;font-size:11.5px;line-height:11.5px;color:#181818;font-weight:400;transform:scaleY(1.1);transform-origin:0 9.73px;">testing 123456789</div>
<div class="t" style="left:914px;top:327.87px;font-size:11.5px;line-height:11.5px;color:#181818;font-weight:400;transform:scaleY(1.1);transform-origin:0 9.73px;">12</div>
<svg style="position:absolute;left:998px;top:323.5px;" width="16" height="18" viewBox="0 0 16 18"><path d="M1.9 2.6Q1.9 1.3 3.2 1.3H12.8Q14.1 1.3 14.1 2.6V12.7L8 16.7L1.9 12.7Z" fill="none" stroke="#2f9a45" stroke-width="1.7" stroke-linejoin="round"/><path d="M4.9 12L8 4.6L11.1 12M6 9.6H10" fill="none" stroke="#2f9a45" stroke-width="1.75" stroke-linejoin="round"/></svg>
<div class="t" style="left:1024px;top:327.87px;font-size:11.5px;line-height:11.5px;color:#1a2d56;font-weight:400;transform:scaleY(1.1);transform-origin:0 9.73px;">24</div>
<div class="t" style="left:1135px;top:327.87px;font-size:11.5px;line-height:11.5px;color:#1a2d56;font-weight:400;transform:scaleY(1.1);transform-origin:0 9.73px;">0.5</div>
<div style="left:1341.3px;top:323.3px;width:4.5px;height:4.5px;background:#005f99;border-radius:0.5px;"></div>
<div style="left:1341.3px;top:330.3px;width:4.5px;height:4.5px;background:#005f99;border-radius:0.5px;"></div>
<div style="left:1341.3px;top:337.3px;width:4.5px;height:4.5px;background:#005f99;border-radius:0.5px;"></div>
<div class="t" style="left:1360px;top:326.57px;font-size:11.5px;line-height:11.5px;color:#181818;font-weight:400;transform:scaleY(1.1);transform-origin:0 9.73px;">10</div>
<div class="t" style="left:1577px;top:327.87px;font-size:11.5px;line-height:11.5px;color:#181818;font-weight:400;transform:scaleY(1.1);transform-origin:0 9.73px;">Default</div>
<div style="left:276px;top:353px;width:14px;height:14px;border:2px solid #005f99;border-radius:2.5px;background:#fff;"></div>
<div class="t" style="left:305px;top:356.87px;font-size:11.5px;line-height:11.5px;color:#1466a0;font-weight:400;transform:scaleY(1.1);transform-origin:0 9.73px;">2 ORDERS</div>
<div class="t" style="left:416px;top:356.87px;font-size:11.5px;line-height:11.5px;color:#181818;font-weight:400;transform:scaleY(1.1);transform-origin:0 9.73px;">12/03/2020</div>
<div class="t" style="left:526px;top:356.87px;font-size:11.5px;line-height:11.5px;color:#181818;font-weight:400;transform:scaleY(1.1);transform-origin:0 9.73px;">RounBlac10Cott</div>
<div class="t" style="left:637px;top:356.87px;font-size:11.5px;line-height:11.5px;color:#181818;font-weight:400;transform:scaleY(1.1);transform-origin:0 9.73px;">testing 123456789</div>
<div class="t" style="left:914px;top:356.87px;font-size:11.5px;line-height:11.5px;color:#181818;font-weight:400;transform:scaleY(1.1);transform-origin:0 9.73px;">36</div>
<svg style="position:absolute;left:998px;top:352.5px;" width="16" height="18" viewBox="0 0 16 18"><path d="M1.9 2.6Q1.9 1.3 3.2 1.3H12.8Q14.1 1.3 14.1 2.6V12.7L8 16.7L1.9 12.7Z" fill="none" stroke="#2f9a45" stroke-width="1.7" stroke-linejoin="round"/><path d="M4.9 12L8 4.6L11.1 12M6 9.6H10" fill="none" stroke="#2f9a45" stroke-width="1.75" stroke-linejoin="round"/></svg>
<div class="t" style="left:1024px;top:356.87px;font-size:11.5px;line-height:11.5px;color:#1a2d56;font-weight:400;transform:scaleY(1.1);transform-origin:0 9.73px;">24</div>
<div class="t" style="left:1135px;top:356.87px;font-size:11.5px;line-height:11.5px;color:#1a2d56;font-weight:400;transform:scaleY(1.1);transform-origin:0 9.73px;">1.5</div>
<div style="left:1341.3px;top:352.3px;width:4.5px;height:4.5px;background:#005f99;border-radius:0.5px;"></div>
<div style="left:1341.3px;top:359.3px;width:4.5px;height:4.5px;background:#005f99;border-radius:0.5px;"></div>
<div style="left:1341.3px;top:366.3px;width:4.5px;height:4.5px;background:#005f99;border-radius:0.5px;"></div>
<div class="t" style="left:1360px;top:355.57px;font-size:11.5px;line-height:11.5px;color:#181818;font-weight:400;transform:scaleY(1.1);transform-origin:0 9.73px;">10</div>
<div class="t" style="left:1577px;top:356.87px;font-size:11.5px;line-height:11.5px;color:#181818;font-weight:400;transform:scaleY(1.1);transform-origin:0 9.73px;">Default</div>
<div style="left:276px;top:383px;width:14px;height:14px;border:2px solid #005f99;border-radius:2.5px;background:#fff;"></div>
<div class="t" style="left:305px;top:386.87px;font-size:11.5px;line-height:11.5px;color:#1466a0;font-weight:400;transform:scaleY(1.1);transform-origin:0 9.73px;">IRC-0012636</div>
<div class="t" style="left:416px;top:386.87px;font-size:11.5px;line-height:11.5px;color:#181818;font-weight:400;transform:scaleY(1.1);transform-origin:0 9.73px;">12/07/2020</div>
<div class="t" style="left:526px;top:386.87px;font-size:11.5px;line-height:11.5px;color:#181818;font-weight:400;transform:scaleY(1.1);transform-origin:0 9.73px;">DD1</div>
<div class="t" style="left:637px;top:386.87px;font-size:11.5px;line-height:11.5px;color:#181818;font-weight:400;transform:scaleY(1.1);transform-origin:0 9.73px;"></div>
<div class="t" style="left:914px;top:386.87px;font-size:11.5px;line-height:11.5px;color:#181818;font-weight:400;transform:scaleY(1.1);transform-origin:0 9.73px;">96</div>
<svg style="position:absolute;left:998px;top:382.5px;" width="16" height="18" viewBox="0 0 16 18"><path d="M1.9 2.6Q1.9 1.3 3.2 1.3H12.8Q14.1 1.3 14.1 2.6V12.7L8 16.7L1.9 12.7Z" fill="none" stroke="#2f9a45" stroke-width="1.7" stroke-linejoin="round"/><path d="M4.9 12L8 4.6L11.1 12M6 9.6H10" fill="none" stroke="#2f9a45" stroke-width="1.75" stroke-linejoin="round"/></svg>
<div class="t" style="left:1024px;top:386.87px;font-size:11.5px;line-height:11.5px;color:#1a2d56;font-weight:400;transform:scaleY(1.1);transform-origin:0 9.73px;">32</div>
<div class="t" style="left:1135px;top:386.87px;font-size:11.5px;line-height:11.5px;color:#1a2d56;font-weight:400;transform:scaleY(1.1);transform-origin:0 9.73px;">3</div>
<div style="left:1341.3px;top:382.3px;width:4.5px;height:4.5px;background:#005f99;border-radius:0.5px;"></div>
<div style="left:1341.3px;top:389.3px;width:4.5px;height:4.5px;background:#005f99;border-radius:0.5px;"></div>
<div style="left:1341.3px;top:396.3px;width:4.5px;height:4.5px;background:#005f99;border-radius:0.5px;"></div>
<div class="t" style="left:1360px;top:385.57px;font-size:11.5px;line-height:11.5px;color:#181818;font-weight:400;transform:scaleY(1.1);transform-origin:0 9.73px;">32</div>
<div class="t" style="left:1577px;top:386.87px;font-size:11.5px;line-height:11.5px;color:#181818;font-weight:400;transform:scaleY(1.1);transform-origin:0 9.73px;">Default</div>
<div style="left:276px;top:413px;width:14px;height:14px;border:2px solid #005f99;border-radius:2.5px;background:#fff;"></div>
<div class="t" style="left:305px;top:416.87px;font-size:11.5px;line-height:11.5px;color:#1466a0;font-weight:400;transform:scaleY(1.1);transform-origin:0 9.73px;">IRC-0012636-2</div>
<div class="t" style="left:416px;top:416.87px;font-size:11.5px;line-height:11.5px;color:#181818;font-weight:400;transform:scaleY(1.1);transform-origin:0 9.73px;">12/07/2020</div>
<div class="t" style="left:526px;top:416.87px;font-size:11.5px;line-height:11.5px;color:#181818;font-weight:400;transform:scaleY(1.1);transform-origin:0 9.73px;">DD1</div>
<div class="t" style="left:637px;top:416.87px;font-size:11.5px;line-height:11.5px;color:#181818;font-weight:400;transform:scaleY(1.1);transform-origin:0 9.73px;"></div>
<div class="t" style="left:914px;top:416.87px;font-size:11.5px;line-height:11.5px;color:#181818;font-weight:400;transform:scaleY(1.1);transform-origin:0 9.73px;">224</div>
<svg style="position:absolute;left:998px;top:412.5px;" width="16" height="18" viewBox="0 0 16 18"><path d="M1.9 2.6Q1.9 1.3 3.2 1.3H12.8Q14.1 1.3 14.1 2.6V12.7L8 16.7L1.9 12.7Z" fill="none" stroke="#2f9a45" stroke-width="1.7" stroke-linejoin="round"/><path d="M4.9 12L8 4.6L11.1 12M6 9.6H10" fill="none" stroke="#2f9a45" stroke-width="1.75" stroke-linejoin="round"/></svg>
<div class="t" style="left:1024px;top:416.87px;font-size:11.5px;line-height:11.5px;color:#1a2d56;font-weight:400;transform:scaleY(1.1);transform-origin:0 9.73px;">32</div>
<div class="t" style="left:1135px;top:416.87px;font-size:11.5px;line-height:11.5px;color:#1a2d56;font-weight:400;transform:scaleY(1.1);transform-origin:0 9.73px;">7</div>
<div style="left:1341.3px;top:412.3px;width:4.5px;height:4.5px;background:#005f99;border-radius:0.5px;"></div>
<div style="left:1341.3px;top:419.3px;width:4.5px;height:4.5px;background:#005f99;border-radius:0.5px;"></div>
<div style="left:1341.3px;top:426.3px;width:4.5px;height:4.5px;background:#005f99;border-radius:0.5px;"></div>
<div class="t" style="left:1360px;top:415.57px;font-size:11.5px;line-height:11.5px;color:#181818;font-weight:400;transform:scaleY(1.1);transform-origin:0 9.73px;">32</div>
<div class="t" style="left:1577px;top:416.87px;font-size:11.5px;line-height:11.5px;color:#181818;font-weight:400;transform:scaleY(1.1);transform-origin:0 9.73px;">Default</div>
<div style="left:276px;top:442px;width:14px;height:14px;border:2px solid #005f99;border-radius:2.5px;background:#fff;"></div>
<div class="t" style="left:305px;top:445.87px;font-size:11.5px;line-height:11.5px;color:#1466a0;font-weight:400;transform:scaleY(1.1);transform-origin:0 9.73px;">2 ORDERS</div>
<div class="t" style="left:416px;top:445.87px;font-size:11.5px;line-height:11.5px;color:#181818;font-weight:400;transform:scaleY(1.1);transform-origin:0 9.73px;">12/23/2020</div>
<div class="t" style="left:526px;top:445.87px;font-size:11.5px;line-height:11.5px;color:#181818;font-weight:400;transform:scaleY(1.1);transform-origin:0 9.73px;">RounBlac11Wool</div>
<div class="t" style="left:637px;top:445.87px;font-size:11.5px;line-height:11.5px;color:#181818;font-weight:400;transform:scaleY(1.1);transform-origin:0 9.73px;">Round Black 11 Wool</div>
<div class="t" style="left:914px;top:445.87px;font-size:11.5px;line-height:11.5px;color:#181818;font-weight:400;transform:scaleY(1.1);transform-origin:0 9.73px;">38</div>
<svg style="position:absolute;left:998px;top:441.5px;" width="16" height="18" viewBox="0 0 16 18"><path d="M1.9 2.6Q1.9 1.3 3.2 1.3H12.8Q14.1 1.3 14.1 2.6V12.7L8 16.7L1.9 12.7Z" fill="none" stroke="#2f9a45" stroke-width="1.7" stroke-linejoin="round"/><path d="M4.9 12L8 4.6L11.1 12M6 9.6H10" fill="none" stroke="#2f9a45" stroke-width="1.75" stroke-linejoin="round"/></svg>
<div class="t" style="left:1024px;top:445.87px;font-size:11.5px;line-height:11.5px;color:#1a2d56;font-weight:400;transform:scaleY(1.1);transform-origin:0 9.73px;"></div>
<div class="t" style="left:1135px;top:445.87px;font-size:11.5px;line-height:11.5px;color:#1a2d56;font-weight:400;transform:scaleY(1.1);transform-origin:0 9.73px;"></div>
<div style="left:1341.3px;top:441.3px;width:4.5px;height:4.5px;background:#005f99;border-radius:0.5px;"></div>
<div style="left:1341.3px;top:448.3px;width:4.5px;height:4.5px;background:#005f99;border-radius:0.5px;"></div>
<div style="left:1341.3px;top:455.3px;width:4.5px;height:4.5px;background:#005f99;border-radius:0.5px;"></div>
<div class="t" style="left:1360px;top:444.57px;font-size:11.5px;line-height:11.5px;color:#181818;font-weight:400;transform:scaleY(1.1);transform-origin:0 9.73px;">12</div>
<div class="t" style="left:1577px;top:445.87px;font-size:11.5px;line-height:11.5px;color:#181818;font-weight:400;transform:scaleY(1.1);transform-origin:0 9.73px;">Default</div>
<div style="left:276px;top:471px;width:14px;height:14px;border:2px solid #005f99;border-radius:2.5px;background:#fff;"></div>
<div class="t" style="left:305px;top:474.87px;font-size:11.5px;line-height:11.5px;color:#1466a0;font-weight:400;transform:scaleY(1.1);transform-origin:0 9.73px;">IRC-0012708</div>
<div class="t" style="left:416px;top:474.87px;font-size:11.5px;line-height:11.5px;color:#181818;font-weight:400;transform:scaleY(1.1);transform-origin:0 9.73px;">12/23/2020</div>
<div class="t" style="left:526px;top:474.87px;font-size:11.5px;line-height:11.5px;color:#181818;font-weight:400;transform:scaleY(1.1);transform-origin:0 9.73px;">RounBlac10Cott</div>
<div class="t" style="left:637px;top:474.87px;font-size:11.5px;line-height:11.5px;color:#181818;font-weight:400;transform:scaleY(1.1);transform-origin:0 9.73px;">testing 123456789</div>
<div class="t" style="left:914px;top:474.87px;font-size:11.5px;line-height:11.5px;color:#181818;font-weight:400;transform:scaleY(1.1);transform-origin:0 9.73px;">80</div>
<svg style="position:absolute;left:998px;top:470.5px;" width="16" height="18" viewBox="0 0 16 18"><path d="M1.9 2.6Q1.9 1.3 3.2 1.3H12.8Q14.1 1.3 14.1 2.6V12.7L8 16.7L1.9 12.7Z" fill="none" stroke="#2f9a45" stroke-width="1.7" stroke-linejoin="round"/><path d="M4.9 12L8 4.6L11.1 12M6 9.6H10" fill="none" stroke="#2f9a45" stroke-width="1.75" stroke-linejoin="round"/></svg>
<div class="t" style="left:1024px;top:474.87px;font-size:11.5px;line-height:11.5px;color:#1a2d56;font-weight:400;transform:scaleY(1.1);transform-origin:0 9.73px;">24</div>
<div class="t" style="left:1135px;top:474.87px;font-size:11.5px;line-height:11.5px;color:#1a2d56;font-weight:400;transform:scaleY(1.1);transform-origin:0 9.73px;">3.333</div>
<div style="left:1341.3px;top:470.3px;width:4.5px;height:4.5px;background:#005f99;border-radius:0.5px;"></div>
<div style="left:1341.3px;top:477.3px;width:4.5px;height:4.5px;background:#005f99;border-radius:0.5px;"></div>
<div style="left:1341.3px;top:484.3px;width:4.5px;height:4.5px;background:#005f99;border-radius:0.5px;"></div>
<div class="t" style="left:1360px;top:473.57px;font-size:11.5px;line-height:11.5px;color:#181818;font-weight:400;transform:scaleY(1.1);transform-origin:0 9.73px;">10</div>
<div class="t" style="left:1577px;top:474.87px;font-size:11.5px;line-height:11.5px;color:#181818;font-weight:400;transform:scaleY(1.1);transform-origin:0 9.73px;">Default</div>
<div style="left:276px;top:500px;width:14px;height:14px;border:2px solid #005f99;border-radius:2.5px;background:#fff;"></div>
<div class="t" style="left:305px;top:503.87px;font-size:11.5px;line-height:11.5px;color:#1466a0;font-weight:400;transform:scaleY(1.1);transform-origin:0 9.73px;">6 ORDERS</div>
<div class="t" style="left:416px;top:503.87px;font-size:11.5px;line-height:11.5px;color:#181818;font-weight:400;transform:scaleY(1.1);transform-origin:0 9.73px;">12/31/2020</div>
<div class="t" style="left:526px;top:503.87px;font-size:11.5px;line-height:11.5px;color:#181818;font-weight:400;transform:scaleY(1.1);transform-origin:0 9.73px;">RounBlac11Nylo</div>
<div class="t" style="left:637px;top:503.87px;font-size:11.5px;line-height:11.5px;color:#181818;font-weight:400;transform:scaleY(1.1);transform-origin:0 9.73px;">Round Black 11 Nylon</div>
<div class="t" style="left:914px;top:503.87px;font-size:11.5px;line-height:11.5px;color:#181818;font-weight:400;transform:scaleY(1.1);transform-origin:0 9.73px;">111.822</div>
<svg style="position:absolute;left:998px;top:499.5px;" width="16" height="18" viewBox="0 0 16 18"><path d="M1.9 2.6Q1.9 1.3 3.2 1.3H12.8Q14.1 1.3 14.1 2.6V12.7L8 16.7L1.9 12.7Z" fill="none" stroke="#2f9a45" stroke-width="1.7" stroke-linejoin="round"/><path d="M4.9 12L8 4.6L11.1 12M6 9.6H10" fill="none" stroke="#2f9a45" stroke-width="1.75" stroke-linejoin="round"/></svg>
<div class="t" style="left:1024px;top:503.87px;font-size:11.5px;line-height:11.5px;color:#1a2d56;font-weight:400;transform:scaleY(1.1);transform-origin:0 9.73px;"></div>
<div class="t" style="left:1135px;top:503.87px;font-size:11.5px;line-height:11.5px;color:#1a2d56;font-weight:400;transform:scaleY(1.1);transform-origin:0 9.73px;"></div>
<div class="t" style="left:1360px;top:502.57px;font-size:11.5px;line-height:11.5px;color:#181818;font-weight:400;transform:scaleY(1.1);transform-origin:0 9.73px;"></div>
<div class="t" style="left:1577px;top:503.87px;font-size:11.5px;line-height:11.5px;color:#181818;font-weight:400;transform:scaleY(1.1);transform-origin:0 9.73px;">Default</div>
<div style="left:276px;top:529px;width:14px;height:14px;border:2px solid #005f99;border-radius:2.5px;background:#fff;"></div>
<div class="t" style="left:305px;top:532.87px;font-size:11.5px;line-height:11.5px;color:#1466a0;font-weight:400;transform:scaleY(1.1);transform-origin:0 9.73px;">21 ORDERS</div>
<div class="t" style="left:416px;top:532.87px;font-size:11.5px;line-height:11.5px;color:#181818;font-weight:400;transform:scaleY(1.1);transform-origin:0 9.73px;">12/31/2020</div>
<div class="t" style="left:526px;top:532.87px;font-size:11.5px;line-height:11.5px;color:#181818;font-weight:400;transform:scaleY(1.1);transform-origin:0 9.73px;">RounBlac10Wool</div>
<div class="t" style="left:637px;top:532.87px;font-size:11.5px;line-height:11.5px;color:#181818;font-weight:400;transform:scaleY(1.1);transform-origin:0 9.73px;">Round Black 10 Wool</div>
<div class="t" style="left:914px;top:532.87px;font-size:11.5px;line-height:11.5px;color:#181818;font-weight:400;transform:scaleY(1.1);transform-origin:0 9.73px;">1381</div>
<svg style="position:absolute;left:998px;top:528.5px;" width="16" height="18" viewBox="0 0 16 18"><path d="M1.9 2.6Q1.9 1.3 3.2 1.3H12.8Q14.1 1.3 14.1 2.6V12.7L8 16.7L1.9 12.7Z" fill="none" stroke="#2f9a45" stroke-width="1.7" stroke-linejoin="round"/><path d="M4.9 12L8 4.6L11.1 12M6 9.6H10" fill="none" stroke="#2f9a45" stroke-width="1.75" stroke-linejoin="round"/></svg>
<div class="t" style="left:1024px;top:532.87px;font-size:11.5px;line-height:11.5px;color:#1a2d56;font-weight:400;transform:scaleY(1.1);transform-origin:0 9.73px;"></div>
<div class="t" style="left:1135px;top:532.87px;font-size:11.5px;line-height:11.5px;color:#1a2d56;font-weight:400;transform:scaleY(1.1);transform-origin:0 9.73px;"></div>
<div style="left:1341.3px;top:528.3px;width:4.5px;height:4.5px;background:#005f99;border-radius:0.5px;"></div>
<div style="left:1341.3px;top:535.3px;width:4.5px;height:4.5px;background:#005f99;border-radius:0.5px;"></div>
<div style="left:1341.3px;top:542.3px;width:4.5px;height:4.5px;background:#005f99;border-radius:0.5px;"></div>
<div class="t" style="left:1360px;top:531.57px;font-size:11.5px;line-height:11.5px;color:#181818;font-weight:400;transform:scaleY(1.1);transform-origin:0 9.73px;">15.7</div>
<div class="t" style="left:1577px;top:532.87px;font-size:11.5px;line-height:11.5px;color:#181818;font-weight:400;transform:scaleY(1.1);transform-origin:0 9.73px;">Default</div>
<div style="left:276px;top:558px;width:14px;height:14px;border:2px solid #005f99;border-radius:2.5px;background:#fff;"></div>
<div class="t" style="left:305px;top:561.87px;font-size:11.5px;line-height:11.5px;color:#1466a0;font-weight:400;transform:scaleY(1.1);transform-origin:0 9.73px;">IRC-0012715</div>
<div class="t" style="left:416px;top:561.87px;font-size:11.5px;line-height:11.5px;color:#181818;font-weight:400;transform:scaleY(1.1);transform-origin:0 9.73px;">12/31/2020</div>
<div class="t" style="left:526px;top:561.87px;font-size:11.5px;line-height:11.5px;color:#181818;font-weight:400;transform:scaleY(1.1);transform-origin:0 9.73px;">RounBlac10Cott</div>
<div class="t" style="left:637px;top:561.87px;font-size:11.5px;line-height:11.5px;color:#181818;font-weight:400;transform:scaleY(1.1);transform-origin:0 9.73px;">testing 123456789</div>
<div class="t" style="left:914px;top:561.87px;font-size:11.5px;line-height:11.5px;color:#181818;font-weight:400;transform:scaleY(1.1);transform-origin:0 9.73px;">120</div>
<svg style="position:absolute;left:998px;top:557.5px;" width="16" height="18" viewBox="0 0 16 18"><path d="M1.9 2.6Q1.9 1.3 3.2 1.3H12.8Q14.1 1.3 14.1 2.6V12.7L8 16.7L1.9 12.7Z" fill="none" stroke="#2f9a45" stroke-width="1.7" stroke-linejoin="round"/><path d="M4.9 12L8 4.6L11.1 12M6 9.6H10" fill="none" stroke="#2f9a45" stroke-width="1.75" stroke-linejoin="round"/></svg>
<div class="t" style="left:1024px;top:561.87px;font-size:11.5px;line-height:11.5px;color:#1a2d56;font-weight:400;transform:scaleY(1.1);transform-origin:0 9.73px;">24</div>
<div class="t" style="left:1135px;top:561.87px;font-size:11.5px;line-height:11.5px;color:#1a2d56;font-weight:400;transform:scaleY(1.1);transform-origin:0 9.73px;">5</div>
<div style="left:1341.3px;top:557.3px;width:4.5px;height:4.5px;background:#005f99;border-radius:0.5px;"></div>
<div style="left:1341.3px;top:564.3px;width:4.5px;height:4.5px;background:#005f99;border-radius:0.5px;"></div>
<div style="left:1341.3px;top:571.3px;width:4.5px;height:4.5px;background:#005f99;border-radius:0.5px;"></div>
<div class="t" style="left:1360px;top:560.57px;font-size:11.5px;line-height:11.5px;color:#181818;font-weight:400;transform:scaleY(1.1);transform-origin:0 9.73px;">10</div>
<div class="t" style="left:1577px;top:561.87px;font-size:11.5px;line-height:11.5px;color:#181818;font-weight:400;transform:scaleY(1.1);transform-origin:0 9.73px;">Default</div>
<svg style="position:absolute;left:1779px;top:243.2px;" width="10" height="6.8" viewBox="0 0 10 6.8"><path d="M0 0H10L5 6.8Z" fill="#c4c4c4"/></svg>
<div class="t" style="left:1798px;top:240.87px;font-size:11.5px;line-height:11.5px;color:#181818;font-weight:400;transform:scaleY(1.1);transform-origin:0 9.73px;">Spring Valley</div>
<svg style="position:absolute;left:1779px;top:272.2px;" width="10" height="6.8" viewBox="0 0 10 6.8"><path d="M0 0H10L5 6.8Z" fill="#c4c4c4"/></svg>
<div class="t" style="left:1798px;top:269.87px;font-size:11.5px;line-height:11.5px;color:#181818;font-weight:400;transform:scaleY(1.1);transform-origin:0 9.73px;">Spring Valley</div>
<svg style="position:absolute;left:1779px;top:301.2px;" width="10" height="6.8" viewBox="0 0 10 6.8"><path d="M0 0H10L5 6.8Z" fill="#c4c4c4"/></svg>
<div class="t" style="left:1798px;top:298.87px;font-size:11.5px;line-height:11.5px;color:#181818;font-weight:400;transform:scaleY(1.1);transform-origin:0 9.73px;">Spring Valley</div>
<svg style="position:absolute;left:1779px;top:330.2px;" width="10" height="6.8" viewBox="0 0 10 6.8"><path d="M0 0H10L5 6.8Z" fill="#c4c4c4"/></svg>
<div class="t" style="left:1798px;top:327.87px;font-size:11.5px;line-height:11.5px;color:#181818;font-weight:400;transform:scaleY(1.1);transform-origin:0 9.73px;">Spring Valley</div>
<svg style="position:absolute;left:1779px;top:359.2px;" width="10" height="6.8" viewBox="0 0 10 6.8"><path d="M0 0H10L5 6.8Z" fill="#c4c4c4"/></svg>
<div class="t" style="left:1798px;top:356.87px;font-size:11.5px;line-height:11.5px;color:#181818;font-weight:400;transform:scaleY(1.1);transform-origin:0 9.73px;">Spring Valley</div>
<svg style="position:absolute;left:1779px;top:389.2px;" width="10" height="6.8" viewBox="0 0 10 6.8"><path d="M0 0H10L5 6.8Z" fill="#c4c4c4"/></svg>
<div class="t" style="left:1798px;top:386.87px;font-size:11.5px;line-height:11.5px;color:#181818;font-weight:400;transform:scaleY(1.1);transform-origin:0 9.73px;">Spring Valley</div>
<svg style="position:absolute;left:1779px;top:419.2px;" width="10" height="6.8" viewBox="0 0 10 6.8"><path d="M0 0H10L5 6.8Z" fill="#c4c4c4"/></svg>
<div class="t" style="left:1798px;top:416.87px;font-size:11.5px;line-height:11.5px;color:#181818;font-weight:400;transform:scaleY(1.1);transform-origin:0 9.73px;">Spring Valley</div>
<svg style="position:absolute;left:1779px;top:448.2px;" width="10" height="6.8" viewBox="0 0 10 6.8"><path d="M0 0H10L5 6.8Z" fill="#c4c4c4"/></svg>
<div class="t" style="left:1798px;top:445.87px;font-size:11.5px;line-height:11.5px;color:#181818;font-weight:400;transform:scaleY(1.1);transform-origin:0 9.73px;">Spring Valley</div>
<svg style="position:absolute;left:1779px;top:477.2px;" width="10" height="6.8" viewBox="0 0 10 6.8"><path d="M0 0H10L5 6.8Z" fill="#c4c4c4"/></svg>
<div class="t" style="left:1798px;top:474.87px;font-size:11.5px;line-height:11.5px;color:#181818;font-weight:400;transform:scaleY(1.1);transform-origin:0 9.73px;">Spring Valley</div>
<svg style="position:absolute;left:1779px;top:506.2px;" width="10" height="6.8" viewBox="0 0 10 6.8"><path d="M0 0H10L5 6.8Z" fill="#c4c4c4"/></svg>
<div class="t" style="left:1798px;top:503.87px;font-size:11.5px;line-height:11.5px;color:#181818;font-weight:400;transform:scaleY(1.1);transform-origin:0 9.73px;">Spring Valley</div>
<svg style="position:absolute;left:1779px;top:535.2px;" width="10" height="6.8" viewBox="0 0 10 6.8"><path d="M0 0H10L5 6.8Z" fill="#c4c4c4"/></svg>
<div class="t" style="left:1798px;top:532.87px;font-size:11.5px;line-height:11.5px;color:#181818;font-weight:400;transform:scaleY(1.1);transform-origin:0 9.73px;">Spring Valley</div>
<svg style="position:absolute;left:1779px;top:564.2px;" width="10" height="6.8" viewBox="0 0 10 6.8"><path d="M0 0H10L5 6.8Z" fill="#c4c4c4"/></svg>
<div class="t" style="left:1798px;top:561.87px;font-size:11.5px;line-height:11.5px;color:#181818;font-weight:400;transform:scaleY(1.1);transform-origin:0 9.73px;">Spring Valley</div>
<svg style="position:absolute;left:1779px;top:593.2px;" width="10" height="6.8" viewBox="0 0 10 6.8"><path d="M0 0H10L5 6.8Z" fill="#c4c4c4"/></svg>
<div class="t" style="left:1798px;top:590.87px;font-size:11.5px;line-height:11.5px;color:#181818;font-weight:400;transform:scaleY(1.1);transform-origin:0 9.73px;">Spring Valley</div>
<svg style="position:absolute;left:1779px;top:622.2px;" width="10" height="6.8" viewBox="0 0 10 6.8"><path d="M0 0H10L5 6.8Z" fill="#c4c4c4"/></svg>
<div class="t" style="left:1798px;top:619.87px;font-size:11.5px;line-height:11.5px;color:#181818;font-weight:400;transform:scaleY(1.1);transform-origin:0 9.73px;">Spring Valley</div>
<svg style="position:absolute;left:1779px;top:651.2px;" width="10" height="6.8" viewBox="0 0 10 6.8"><path d="M0 0H10L5 6.8Z" fill="#c4c4c4"/></svg>
<div class="t" style="left:1798px;top:648.87px;font-size:11.5px;line-height:11.5px;color:#181818;font-weight:400;transform:scaleY(1.1);transform-origin:0 9.73px;">Spring Valley</div>
<svg style="position:absolute;left:1779px;top:680.2px;" width="10" height="6.8" viewBox="0 0 10 6.8"><path d="M0 0H10L5 6.8Z" fill="#c4c4c4"/></svg>
<div class="t" style="left:1798px;top:677.87px;font-size:11.5px;line-height:11.5px;color:#181818;font-weight:400;transform:scaleY(1.1);transform-origin:0 9.73px;">Spring Valley</div>
<svg style="position:absolute;left:1779px;top:709.2px;" width="10" height="6.8" viewBox="0 0 10 6.8"><path d="M0 0H10L5 6.8Z" fill="#c4c4c4"/></svg>
<div class="t" style="left:1798px;top:706.87px;font-size:11.5px;line-height:11.5px;color:#181818;font-weight:400;transform:scaleY(1.1);transform-origin:0 9.73px;">Spring Valley</div>
<svg style="position:absolute;left:1779px;top:738.2px;" width="10" height="6.8" viewBox="0 0 10 6.8"><path d="M0 0H10L5 6.8Z" fill="#c4c4c4"/></svg>
<div class="t" style="left:1798px;top:735.87px;font-size:11.5px;line-height:11.5px;color:#181818;font-weight:400;transform:scaleY(1.1);transform-origin:0 9.73px;">Spring Valley</div>
<svg style="position:absolute;left:1779px;top:767.2px;" width="10" height="6.8" viewBox="0 0 10 6.8"><path d="M0 0H10L5 6.8Z" fill="#c4c4c4"/></svg>
<div class="t" style="left:1798px;top:764.87px;font-size:11.5px;line-height:11.5px;color:#181818;font-weight:400;transform:scaleY(1.1);transform-origin:0 9.73px;">Spring Valley</div>
<svg style="position:absolute;left:1779px;top:796.2px;" width="10" height="6.8" viewBox="0 0 10 6.8"><path d="M0 0H10L5 6.8Z" fill="#c4c4c4"/></svg>
<div class="t" style="left:1798px;top:793.87px;font-size:11.5px;line-height:11.5px;color:#181818;font-weight:400;transform:scaleY(1.1);transform-origin:0 9.73px;">Spring Valley</div>
<svg style="position:absolute;left:1779px;top:825.2px;" width="10" height="6.8" viewBox="0 0 10 6.8"><path d="M0 0H10L5 6.8Z" fill="#c4c4c4"/></svg>
<div class="t" style="left:1798px;top:822.87px;font-size:11.5px;line-height:11.5px;color:#181818;font-weight:400;transform:scaleY(1.1);transform-origin:0 9.73px;">Spring Valley</div>
<svg style="position:absolute;left:1779px;top:854.2px;" width="10" height="6.8" viewBox="0 0 10 6.8"><path d="M0 0H10L5 6.8Z" fill="#c4c4c4"/></svg>
<div class="t" style="left:1798px;top:851.87px;font-size:11.5px;line-height:11.5px;color:#181818;font-weight:400;transform:scaleY(1.1);transform-origin:0 9.73px;">Spring Valley</div>
<svg style="position:absolute;left:1779px;top:883.2px;" width="10" height="6.8" viewBox="0 0 10 6.8"><path d="M0 0H10L5 6.8Z" fill="#c4c4c4"/></svg>
<div class="t" style="left:1798px;top:880.87px;font-size:11.5px;line-height:11.5px;color:#181818;font-weight:400;transform:scaleY(1.1);transform-origin:0 9.73px;">Spring Valley</div>
<svg style="position:absolute;left:1779px;top:912.2px;" width="10" height="6.8" viewBox="0 0 10 6.8"><path d="M0 0H10L5 6.8Z" fill="#c4c4c4"/></svg>
<div class="t" style="left:1798px;top:909.87px;font-size:11.5px;line-height:11.5px;color:#181818;font-weight:400;transform:scaleY(1.1);transform-origin:0 9.73px;">Spring Valley</div>
<svg style="position:absolute;left:1779px;top:941.2px;" width="10" height="6.8" viewBox="0 0 10 6.8"><path d="M0 0H10L5 6.8Z" fill="#c4c4c4"/></svg>
<div class="t" style="left:1798px;top:938.87px;font-size:11.5px;line-height:11.5px;color:#181818;font-weight:400;transform:scaleY(1.1);transform-origin:0 9.73px;">Spring Valley</div>
<svg style="position:absolute;left:1779px;top:970.2px;" width="10" height="6.8" viewBox="0 0 10 6.8"><path d="M0 0H10L5 6.8Z" fill="#c4c4c4"/></svg>
<div class="t" style="left:1798px;top:967.87px;font-size:11.5px;line-height:11.5px;color:#181818;font-weight:400;transform:scaleY(1.1);transform-origin:0 9.73px;">Spring Valley</div>
<svg style="position:absolute;left:1779px;top:999.2px;" width="10" height="6.8" viewBox="0 0 10 6.8"><path d="M0 0H10L5 6.8Z" fill="#c4c4c4"/></svg>
<div class="t" style="left:1798px;top:996.87px;font-size:11.5px;line-height:11.5px;color:#181818;font-weight:400;transform:scaleY(1.1);transform-origin:0 9.73px;">Spring Valley</div>
<svg style="position:absolute;left:1779px;top:1028.2px;" width="10" height="6.8" viewBox="0 0 10 6.8"><path d="M0 0H10L5 6.8Z" fill="#c4c4c4"/></svg>
<div class="t" style="left:1798px;top:1025.87px;font-size:11.5px;line-height:11.5px;color:#181818;font-weight:400;transform:scaleY(1.1);transform-origin:0 9.73px;">Spring Valley</div>
<svg style="position:absolute;left:1395px;top:395px;" width="75" height="55" viewBox="0 0 75 55"><path d="M17 15L63.8 45.7" stroke="#f50808" stroke-width="3" stroke-linecap="round"/><path d="M9.7 8L24.1 13.1L19.5 19.8Z" fill="#f50808"/></svg>
<div style="left:138px;top:584px;width:1630px;height:456px;background:rgba(255,255,255,0.6);"></div>
<div style="left:139px;top:585px;width:1628px;height:455px;background:#2b2b2b;"></div>
<div style="left:140px;top:586px;width:1626px;height:454px;background:#fff;"></div>
<div style="left:140px;top:586px;width:1626px;height:34px;background:#636363;"></div>
<div class="t" style="left:156.5px;top:597.66px;font-size:13.4px;line-height:13.4px;color:#e8e8e8;font-weight:400;transform:scaleY(1.1);transform-origin:0 11.34px;">Item Receipt</div>
<div style="left:1619px;top:603px;width:11px;height:1px;background:#e6e6e6;"></div>
<svg style="position:absolute;left:1675px;top:597px;" width="13" height="13" viewBox="0 0 13 13"><rect x="1.5" y="1.5" width="10" height="10" fill="none" stroke="#e6e6e6" stroke-width="1.1"/></svg>
<svg style="position:absolute;left:1732px;top:597px;" width="13" height="13" viewBox="0 0 13 13"><path d="M1 1L12 12M12 1L1 12" stroke="#eeeeee" stroke-width="1.2"/></svg>
<div style="left:140px;top:620px;width:1626px;height:38px;background:#ececec;"></div>
<svg style="position:absolute;left:148px;top:630px;" width="21" height="18" viewBox="0 0 21 18"><rect x="1" y="1.5" width="13" height="2" fill="#005f99"/><rect x="1" y="6" width="13" height="2" fill="#005f99"/><rect x="1" y="10.5" width="8" height="2" fill="#005f99"/><path d="M9.5 15.2L16.6 8.1L19 10.5L11.9 17.6H9.5Z" fill="#005f99"/></svg>
<div class="t" style="left:176px;top:635.03px;font-size:11.3px;line-height:11.3px;color:#1a6aa0;font-weight:400;transform:scaleY(1.1);transform-origin:0 9.57px;">Vendor:</div>
<div style="left:222px;top:628px;width:123px;height:23px;background:#fff;border-radius:3px;"></div>
<div class="t" style="left:226px;top:635.03px;font-size:11.9px;line-height:11.9px;color:#111;font-weight:400;transform:scaleY(1.1);transform-origin:0 10.07px;-webkit-text-stroke:0.3px #111;letter-spacing:-0.1px;">306 Vendor Card</div>
<div style="left:317px;top:631px;width:1px;height:17px;background:#111;"></div>
<div class="t" style="left:371.3px;top:634.74px;font-size:10.7px;line-height:10.7px;color:#666;font-weight:400;transform:scaleY(1.1);transform-origin:0 9.06px;">Payment Terms:</div>
<div style="left:454px;top:627px;width:125px;height:24px;background:#fff;border-radius:3px;"></div>
<div class="t" style="left:458px;top:634.64px;font-size:12.0px;line-height:12.0px;color:#111;font-weight:400;transform:scaleY(1.1);transform-origin:0 10.16px;-webkit-text-stroke:0.3px #111;">Net 15</div>
<div class="t" style="left:1331px;top:635.54px;font-size:10.7px;line-height:10.7px;color:#666;font-weight:400;transform:scaleY(1.1);transform-origin:0 9.06px;">IRC#</div>
<div style="left:1362px;top:628px;width:126px;height:23px;background:#fff;border-radius:3px;"></div>
<div class="t" style="left:1369px;top:634.48px;font-size:11.6px;line-height:11.6px;color:#444;font-weight:400;transform:scaleY(1.1);transform-origin:0 9.82px;">IRC-0012636</div>
<div style="left:1496px;top:620px;width:1px;height:420px;background:#e2e2e2;"></div>
<svg style="position:absolute;left:1575px;top:629px;" width="20" height="20" viewBox="0 0 20 20"><path d="M13 4.8A6 6 0 0 0 4.1 9.6" fill="none" stroke="#005f99" stroke-width="1.9"/><path d="M0.9 9.3H7.5L4.2 12.9Z" fill="#005f99"/><path d="M7 15.2A6 6 0 0 0 15.9 10.4" fill="none" stroke="#005f99" stroke-width="1.9"/><path d="M12.6 10.7H19.2L15.9 7.1Z" fill="#005f99"/></svg>
<svg style="position:absolute;left:1610px;top:629px;" width="19" height="19" viewBox="0 0 19 19"><path d="M12.5 4.5L5 12a2.3 2.3 0 0 0 3.3 3.3L16 7.6a3.9 3.9 0 0 0-5.5-5.5L2.8 9.8a5.4 5.4 0 0 0 7.6 7.6L15.5 12.3" fill="none" stroke="#005f99" stroke-width="1.6" stroke-linecap="round"/></svg>
<div class="t" style="left:1632.5px;top:632.33px;font-size:10px;line-height:10px;color:#e81010;font-weight:400;transform:scaleY(1.1);transform-origin:0 8.46px;">0</div>
<svg style="position:absolute;left:1652px;top:629px;" width="18" height="19" viewBox="0 0 18 19"><path d="M1 1.5L3 0.5L5 1.5L7 0.5L9 1.5L11 0.5L13 1.5L15 0.5L17 1.5V17.5L15 18.5L13 17.5L11 18.5L9 17.5L7 18.5L5 17.5L3 18.5L1 17.5Z" fill="#005f99"/><rect x="4" y="4.5" width="10" height="1.8" fill="#ececec"/><rect x="4" y="8.5" width="10" height="1.8" fill="#ececec"/><rect x="4" y="12.5" width="10" height="1.8" fill="#ececec"/></svg>
<svg style="position:absolute;left:1685px;top:630px;" width="20" height="18" viewBox="0 0 20 18"><rect x="5" y="0.5" width="10" height="5" fill="#005f99"/><rect x="0.5" y="5" width="19" height="8.5" rx="2" fill="#005f99"/><rect x="5" y="10" width="10" height="7.5" fill="#fff" stroke="#005f99" stroke-width="1.6"/><circle cx="16" cy="8" r="1" fill="#ececec"/></svg>
<svg style="position:absolute;left:1708px;top:636px;" width="7" height="4.5" viewBox="0 0 7 4.5"><path d="M0 0H7L3.5 4Z" fill="#005f99"/></svg>
<svg style="position:absolute;left:1732px;top:630px;" width="14" height="18" viewBox="0 0 14 18"><path d="M2 0H8.5L14 5.5V16A2 2 0 0 1 12 18H2A2 2 0 0 1 0 16V2A2 2 0 0 1 2 0Z" fill="#005f99"/><path d="M8.5 0.8V5.5H13.2Z" fill="#fff"/><rect x="3" y="8.6" width="8" height="1.8" fill="#fff"/><rect x="3" y="12.4" width="8" height="1.8" fill="#fff"/></svg>
<svg style="position:absolute;left:1752px;top:636px;" width="8" height="4.5" viewBox="0 0 8 4.5"><path d="M0 0H8L4 4.5Z" fill="#005f99"/></svg>
<div class="t" style="left:157.5px;top:682.58px;font-size:31.8px;line-height:31.8px;color:#2c2c2c;font-weight:400;">Item</div>
<div style="left:227px;top:684px;width:100px;height:28px;background:#2196f3;border-radius:3px;"></div>
<div class="t" style="left:77px;width:400px;text-align:center;top:691.86px;font-size:18.6px;line-height:18.6px;color:#fff;font-weight:400;transform:scaleY(1.1);transform-origin:0 15.74px;-webkit-text-stroke:0.5px #fff;">Received</div>
<div class="t" style="left:825.5px;top:681.48px;font-size:11.6px;line-height:11.6px;color:#555;font-weight:400;transform:scaleX(0.855) scaleY(1.1);transform-origin:0 9.82px;">RECEIVE DATE</div>
<div class="t" style="left:897.5px;top:677.30px;font-size:15px;line-height:15px;color:#e03030;font-weight:700;transform:scaleY(1.1);transform-origin:0 12.70px;">*</div>
<div style="left:825px;top:697px;width:207px;height:25px;background:#f3f3f3;border-radius:3px;"></div>
<div class="t" style="left:836px;top:704.48px;font-size:11.6px;line-height:11.6px;color:#222;font-weight:400;transform:scaleY(1.1);transform-origin:0 9.82px;">12/7/2020</div>
<svg style="position:absolute;left:1014px;top:701px;" width="14" height="16" viewBox="0 0 14 16"><rect x="1" y="2.5" width="12" height="12.5" rx="1.5" fill="none" stroke="#e2e2e2" stroke-width="1.4"/><rect x="1" y="2.5" width="12" height="3" fill="#e2e2e2"/></svg>
<div class="t" style="left:1046px;top:680.68px;font-size:11.6px;line-height:11.6px;color:#555;font-weight:400;transform:scaleX(0.855) scaleY(1.1);transform-origin:0 9.82px;">REFERENCE #</div>
<div style="left:1046px;top:696px;width:206px;height:25px;background:#f3f3f3;border-radius:3px;"></div>
<div class="t" style="left:1052px;top:703.77px;font-size:11.5px;line-height:11.5px;color:#ababab;font-weight:400;transform:scaleY(1.1);transform-origin:0 9.73px;">Reference #</div>
<div class="t" style="left:1266.4px;top:680.18px;font-size:11.6px;line-height:11.6px;color:#555;font-weight:400;transform:scaleX(0.855) scaleY(1.1);transform-origin:0 9.82px;">STORE</div>
<div style="left:1266px;top:696px;width:207px;height:25px;background:#f3f3f3;border-radius:3px;"></div>
<div class="t" style="left:1271px;top:703.18px;font-size:11.6px;line-height:11.6px;color:#222;font-weight:400;transform:scaleY(1.1);transform-origin:0 9.82px;-webkit-text-stroke:0.3px #222;">Spring Valley</div>
<div class="t" style="left:825.5px;top:733.18px;font-size:11.6px;line-height:11.6px;color:#555;font-weight:400;transform:scaleX(0.855) scaleY(1.1);transform-origin:0 9.82px;">BRAND</div>
<div style="left:825px;top:749px;width:207px;height:25px;background:#f3f3f3;border-radius:3px;"></div>
<div class="t" style="left:830.5px;top:756.27px;font-size:11.5px;line-height:11.5px;color:#ababab;font-weight:400;transform:scaleY(1.1);transform-origin:0 9.73px;">Brand</div>
<div class="t" style="left:1266.4px;top:733.18px;font-size:11.6px;line-height:11.6px;color:#555;font-weight:400;transform:scaleX(0.855) scaleY(1.1);transform-origin:0 9.82px;">NAME/ADDRESS</div>
<div style="left:1266px;top:750px;width:207px;height:75px;background:#f3f3f3;border-radius:3px;"></div>
<div class="t" style="left:1273.5px;top:760.18px;font-size:11.6px;line-height:11.6px;color:#555;font-weight:400;transform:scaleY(1.1);transform-origin:0 9.82px;-webkit-text-stroke:0.3px #555;">3611 14th Avenue</div>
<div class="t" style="left:1273.5px;top:776.05px;font-size:11.4px;line-height:11.4px;color:#555;font-weight:400;transform:scaleY(1.1);transform-origin:0 9.65px;-webkit-text-stroke:0.3px #555;">Brooklyn, NY, 11218, US</div>
<svg style="position:absolute;left:1450px;top:805px;" width="16" height="16" viewBox="0 0 16 16"><path d="M1.5 12.2V15H4.3L12.6 6.7L9.8 3.9Z" fill="#005f99"/><path d="M13.6 5.7L14.8 4.5a.8.8 0 0 0 0-1.1L13.1 1.7a.8.8 0 0 0-1.1 0L10.8 2.9Z" fill="#005f99"/></svg>
<div class="t" style="left:825.5px;top:785.18px;font-size:11.6px;line-height:11.6px;color:#555;font-weight:400;transform:scaleX(0.855) scaleY(1.1);transform-origin:0 9.82px;">CATEGORY</div>
<div style="left:825px;top:801px;width:207px;height:25px;background:#f3f3f3;border-radius:3px;"></div>
<div class="t" style="left:830.5px;top:808.27px;font-size:11.5px;line-height:11.5px;color:#ababab;font-weight:400;transform:scaleY(1.1);transform-origin:0 9.73px;">Category</div>
<div style="left:156px;top:839px;width:198px;height:23px;background:#f2f2f2;border:1px solid #e4e4e4;border-radius:3px;"></div>
<div class="t" style="left:162px;top:846.52px;font-size:11.2px;line-height:11.2px;color:#aaa;font-weight:400;transform:scaleY(1.1);transform-origin:0 9.48px;">Search</div>
<svg style="position:absolute;left:358.5px;top:843px;" width="17" height="17" viewBox="0 0 17 17"><circle cx="8.5" cy="8.5" r="8.5" fill="#005f99"/><path d="M5.4 5.4L11.6 11.6M11.6 5.4L5.4 11.6" stroke="#fff" stroke-width="1.6"/></svg>
<div style="left:384px;top:847px;width:23px;height:9px;background:#d6d6d6;border-radius:5px;"></div>
<div style="left:383px;top:845.5px;width:12px;height:12px;background:#a8a8a8;border-radius:6px;"></div>
<div class="t" style="left:417px;top:846.14px;font-size:12.0px;line-height:12.0px;color:#222;font-weight:400;transform:scaleY(1.1);transform-origin:0 10.16px;">Show Only Attention Items</div>
<div style="left:1065px;top:840px;width:106px;height:25px;background:#c8c8c8;border-radius:2px;"></div>
<div class="t" style="left:918.0px;width:400px;text-align:center;top:848.20px;font-size:10.4px;line-height:10.4px;color:#fff;font-weight:400;transform:scaleY(1.1);transform-origin:0 8.80px;">PRICE DETAILS</div>
<div style="left:1172px;top:840px;width:22px;height:25px;background:#005f99;border-radius:2px;"></div>
<svg style="position:absolute;left:1178px;top:850px;" width="10" height="5" viewBox="0 0 10 5"><path d="M0 0H10L5 5Z" fill="#fff"/></svg>
<div style="left:1204px;top:840px;width:96px;height:25px;background:#c8c8c8;border-radius:2px;"></div>
<div class="t" style="left:1052.0px;width:400px;text-align:center;top:848.20px;font-size:10.4px;line-height:10.4px;color:#fff;font-weight:400;transform:scaleY(1.1);transform-origin:0 8.80px;">SCAN ITEMS</div>
<div style="left:1301px;top:840px;width:22px;height:25px;background:#005f99;border-radius:2px;"></div>
<svg style="position:absolute;left:1307px;top:850px;" width="10" height="5" viewBox="0 0 10 5"><path d="M0 0H10L5 5Z" fill="#fff"/></svg>
<div style="left:1333px;top:840px;width:79px;height:25px;background:#005f99;border-radius:2px;"></div>
<div class="t" style="left:1172.5px;width:400px;text-align:center;top:848.03px;font-size:10.6px;line-height:10.6px;color:#fff;font-weight:400;transform:scaleY(1.1);transform-origin:0 8.97px;">ACTIONS</div>
<div style="left:1413px;top:840px;width:22px;height:25px;background:#005f99;border-radius:2px;"></div>
<svg style="position:absolute;left:1419px;top:850px;" width="10" height="5" viewBox="0 0 10 5"><path d="M0 0H10L5 5Z" fill="#fff"/></svg>
<svg style="position:absolute;left:1449px;top:843px;" width="22" height="22" viewBox="0 0 24 24"><path d="M19.14 12.94c.04-.3.06-.61.06-.94 0-.32-.02-.64-.07-.94l2.03-1.58c.18-.14.23-.41.12-.61l-1.92-3.32c-.12-.22-.37-.29-.59-.22l-2.39.96c-.5-.38-1.03-.7-1.62-.94l-.36-2.54c-.04-.24-.24-.41-.48-.41h-3.84c-.24 0-.43.17-.47.41l-.36 2.54c-.59.24-1.13.57-1.62.94l-2.39-.96c-.22-.08-.47 0-.59.22L2.74 8.87c-.12.21-.08.47.12.61l2.03 1.58c-.05.3-.09.63-.09.94s.02.64.07.94l-2.030 1.58c-.18.14-.23.41-.12.61l1.92 3.32c.12.22.37.29.59.22l2.39-.96c.5.38 1.03.7 1.62.94l.36 2.54c.05.24.24.41.48.41h3.84c.24 0 .44-.17.47-.41l.36-2.54c.59-.24 1.13-.56 1.62-.94l2.39.96c.22.08.47 0 .59-.22l1.92-3.32c.12-.22.07-.47-.12-.61l-2.01-1.58zM12 15.6c-1.98 0-3.6-1.62-3.6-3.6s1.62-3.6 3.6-3.6 3.6 1.62 3.6 3.6-1.62 3.6-3.6 3.6z" fill="#005f99"/></svg>
<div style="left:156px;top:877px;width:1309px;height:1px;background:#dedede;"></div>
<div style="left:156px;top:907px;width:1309px;height:1px;background:#dadada;"></div>
<div style="left:156px;top:908px;width:1309px;height:47px;background:#eaf2f6;"></div>
<div style="left:156px;top:986px;width:1309px;height:31px;background:#eaf2f6;"></div>
<div style="left:156px;top:878px;width:1px;height:162px;background:rgba(0,20,40,0.075);"></div>
<div style="left:195px;top:878px;width:1px;height:162px;background:rgba(0,20,40,0.075);"></div>
<div style="left:321px;top:878px;width:1px;height:162px;background:rgba(0,20,40,0.075);"></div>
<div style="left:396px;top:878px;width:1px;height:162px;background:rgba(0,20,40,0.075);"></div>
<div style="left:632px;top:878px;width:1px;height:162px;background:rgba(0,20,40,0.075);"></div>
<div style="left:692px;top:878px;width:1px;height:162px;background:rgba(0,20,40,0.075);"></div>
<div style="left:752px;top:878px;width:1px;height:162px;background:rgba(0,20,40,0.075);"></div>
<div style="left:812px;top:878px;width:1px;height:162px;background:rgba(0,20,40,0.075);"></div>
<div style="left:902px;top:878px;width:1px;height:162px;background:rgba(0,20,40,0.075);"></div>
<div style="left:992px;top:878px;width:1px;height:162px;background:rgba(0,20,40,0.075);"></div>
<div style="left:1072px;top:878px;width:1px;height:162px;background:rgba(0,20,40,0.075);"></div>
<div style="left:1132px;top:878px;width:1px;height:162px;background:rgba(0,20,40,0.075);"></div>
<div style="left:1222px;top:878px;width:1px;height:162px;background:rgba(0,20,40,0.075);"></div>
<div style="left:1282px;top:878px;width:1px;height:162px;background:rgba(0,20,40,0.075);"></div>
<div style="left:1372px;top:878px;width:1px;height:162px;background:rgba(0,20,40,0.075);"></div>
<div style="left:1432px;top:878px;width:1px;height:162px;background:rgba(0,20,40,0.075);"></div>
<div class="t" style="left:162px;top:887.67px;font-size:11.5px;line-height:11.5px;color:#181818;font-weight:400;transform:scaleY(1.1);transform-origin:0 9.73px;">#</div>
<div class="t" style="left:202px;top:887.67px;font-size:11.5px;line-height:11.5px;color:#181818;font-weight:400;transform:scaleY(1.1);transform-origin:0 9.73px;">Name</div>
<div class="t" style="left:327px;top:887.67px;font-size:11.5px;line-height:11.5px;color:#181818;font-weight:400;transform:scaleY(1.1);transform-origin:0 9.73px;">MP #</div>
<div class="t" style="left:402px;top:887.67px;font-size:11.5px;line-height:11.5px;color:#181818;font-weight:400;transform:scaleY(1.1);transform-origin:0 9.73px;">Description</div>
<div class="t" style="left:638px;top:887.67px;font-size:11.5px;line-height:11.5px;color:#181818;font-weight:400;transform:scaleY(1.1);transform-origin:0 9.73px;">Brand</div>
<div class="t" style="left:698px;top:887.67px;font-size:11.5px;line-height:11.5px;color:#181818;font-weight:400;transform:scaleY(1.1);transform-origin:0 9.73px;">Category</div>
<div class="t" style="left:758px;top:887.67px;font-size:11.5px;line-height:11.5px;color:#181818;font-weight:400;transform:scaleY(1.1);transform-origin:0 9.73px;">Qty</div>
<div class="t" style="left:818px;top:887.67px;font-size:11.5px;line-height:11.5px;color:#181818;font-weight:400;transform:scaleY(1.1);transform-origin:0 9.73px;">Open on PO</div>
<div class="t" style="left:908px;top:887.67px;font-size:11.5px;line-height:11.5px;color:#181818;font-weight:400;transform:scaleY(1.1);transform-origin:0 9.73px;">Scanned Qty</div>
<div class="t" style="left:998px;top:887.67px;font-size:11.5px;line-height:11.5px;color:#181818;font-weight:400;transform:scaleY(1.1);transform-origin:0 9.73px;">Total Units</div>
<div class="t" style="left:1438px;top:887.67px;font-size:11.5px;line-height:11.5px;color:#181818;font-weight:400;transform:scaleY(1.1);transform-origin:0 9.73px;">Dama</div>
<div class="t" style="left:1078px;top:880.57px;font-size:11.5px;line-height:11.5px;color:#181818;font-weight:400;transform:scaleY(1.1);transform-origin:0 9.73px;">Qty Per</div>
<div class="t" style="left:1078px;top:895.47px;font-size:11.5px;line-height:11.5px;color:#181818;font-weight:400;transform:scaleY(1.1);transform-origin:0 9.73px;">Carton</div>
<div class="t" style="left:1138px;top:880.57px;font-size:11.5px;line-height:11.5px;color:#181818;font-weight:400;transform:scaleY(1.1);transform-origin:0 9.73px;">Num. of</div>
<div class="t" style="left:1138px;top:895.47px;font-size:11.5px;line-height:11.5px;color:#181818;font-weight:400;transform:scaleY(1.1);transform-origin:0 9.73px;">Cartons</div>
<div class="t" style="left:1228px;top:880.57px;font-size:11.5px;line-height:11.5px;color:#181818;font-weight:400;transform:scaleY(1.1);transform-origin:0 9.73px;">Carton</div>
<div class="t" style="left:1228px;top:895.47px;font-size:11.5px;line-height:11.5px;color:#181818;font-weight:400;transform:scaleY(1.1);transform-origin:0 9.73px;">Per Pallet</div>
<div class="t" style="left:1288px;top:880.57px;font-size:11.5px;line-height:11.5px;color:#181818;font-weight:400;transform:scaleY(1.1);transform-origin:0 9.73px;">Num. of</div>
<div class="t" style="left:1288px;top:895.47px;font-size:11.5px;line-height:11.5px;color:#181818;font-weight:400;transform:scaleY(1.1);transform-origin:0 9.73px;">Pallets</div>
<div class="t" style="left:1378px;top:880.57px;font-size:11.5px;line-height:11.5px;color:#181818;font-weight:400;transform:scaleY(1.1);transform-origin:0 9.73px;">Total</div>
<div class="t" style="left:1378px;top:895.47px;font-size:11.5px;line-height:11.5px;color:#181818;font-weight:400;transform:scaleY(1.1);transform-origin:0 9.73px;">Received</div>
<div style="left:1465px;top:878px;width:14px;height:162px;background:#fff;"></div>
<div style="left:1479px;top:877px;width:1px;height:163px;background:#e6e6e6;"></div>
<div class="t" style="left:162px;top:926.27px;font-size:11.5px;line-height:11.5px;color:#181818;font-weight:400;transform:scaleY(1.1);transform-origin:0 9.73px;">1</div>
<svg style="position:absolute;left:202px;top:925px;" width="13" height="13" viewBox="0 0 13 13"><rect x="0" y="0" width="13" height="13" rx="2" fill="#005f99"/><path d="M2.5 10.5L5.5 6.8L7.6 9L9 7.5L11 10.5Z" fill="#fff"/></svg>
<div class="t" style="left:223.4px;top:925.97px;font-size:11.5px;line-height:11.5px;color:#181818;font-weight:400;transform:scaleY(1.1);transform-origin:0 9.73px;">0316</div>
<svg style="position:absolute;left:404px;top:939px;" width="12" height="9" viewBox="0 0 12 9"><path d="M1 4.6L4.2 7.8L10.8 1.2" fill="none" stroke="#666" stroke-width="1.6"/></svg>
<div class="t" style="left:420px;top:939.01px;font-size:11.8px;line-height:11.8px;color:#666;font-weight:400;transform:scaleY(1.1);transform-origin:0 9.99px;">Item Note</div>
<div class="t" style="left:758px;top:927.07px;font-size:11.5px;line-height:11.5px;color:#1a2d56;font-weight:400;transform:scaleY(1.1);transform-origin:0 9.73px;">120</div>
<div class="t" style="left:818px;top:927.07px;font-size:11.5px;line-height:11.5px;color:#181818;font-weight:400;transform:scaleY(1.1);transform-origin:0 9.73px;">0</div>
<div class="t" style="left:908px;top:927.07px;font-size:11.5px;line-height:11.5px;color:#2a9a2a;font-weight:400;transform:scaleY(1.1);transform-origin:0 9.73px;">0 of 0</div>
<div class="t" style="left:998px;top:927.07px;font-size:11.5px;line-height:11.5px;color:#181818;font-weight:400;transform:scaleY(1.1);transform-origin:0 9.73px;">120</div>
<div class="t" style="left:1082.5px;top:926.07px;font-size:11.5px;line-height:11.5px;color:#181818;font-weight:400;transform:scaleY(1.1);transform-origin:0 9.73px;">24</div>
<div class="t" style="left:1143px;top:926.07px;font-size:11.5px;line-height:11.5px;color:#181818;font-weight:400;transform:scaleY(1.1);transform-origin:0 9.73px;">5</div>
<div class="t" style="left:1378px;top:927.27px;font-size:11.5px;line-height:11.5px;color:#1a2d56;font-weight:400;transform:scaleY(1.1);transform-origin:0 9.73px;">312</div>
<div class="t" style="left:758px;top:965.87px;font-size:11.5px;line-height:11.5px;color:#1a2d56;font-weight:400;transform:scaleY(1.1);transform-origin:0 9.73px;">96</div>
<div class="t" style="left:818px;top:965.87px;font-size:11.5px;line-height:11.5px;color:#181818;font-weight:400;transform:scaleY(1.1);transform-origin:0 9.73px;">0</div>
<div class="t" style="left:908px;top:965.87px;font-size:11.5px;line-height:11.5px;color:#2a9a2a;font-weight:400;transform:scaleY(1.1);transform-origin:0 9.73px;">0 of 0</div>
<div class="t" style="left:998px;top:965.87px;font-size:11.5px;line-height:11.5px;color:#181818;font-weight:400;transform:scaleY(1.1);transform-origin:0 9.73px;">96</div>
<div class="t" style="left:1082.5px;top:964.87px;font-size:11.5px;line-height:11.5px;color:#181818;font-weight:400;transform:scaleY(1.1);transform-origin:0 9.73px;">32</div>
<div class="t" style="left:1143px;top:964.87px;font-size:11.5px;line-height:11.5px;color:#181818;font-weight:400;transform:scaleY(1.1);transform-origin:0 9.73px;">3</div>
<div class="t" style="left:1378px;top:966.07px;font-size:11.5px;line-height:11.5px;color:#1a2d56;font-weight:400;transform:scaleY(1.1);transform-origin:0 9.73px;">320</div>
<div style="left:1064px;top:922.5px;width:4.5px;height:4.5px;background:#005f99;border-radius:0.5px;"></div>
<div style="left:1064px;top:929.5px;width:4.5px;height:4.5px;background:#005f99;border-radius:0.5px;"></div>
<div style="left:1064px;top:936.5px;width:4.5px;height:4.5px;background:#005f99;border-radius:0.5px;"></div>
<div style="left:1214px;top:922.5px;width:4.5px;height:4.5px;background:#005f99;border-radius:0.5px;"></div>
<div style="left:1214px;top:929.5px;width:4.5px;height:4.5px;background:#005f99;border-radius:0.5px;"></div>
<div style="left:1214px;top:936.5px;width:4.5px;height:4.5px;background:#005f99;border-radius:0.5px;"></div>
<div style="left:1064px;top:960.5px;width:4.5px;height:4.5px;background:#005f99;border-radius:0.5px;"></div>
<div style="left:1064px;top:967.5px;width:4.5px;height:4.5px;background:#005f99;border-radius:0.5px;"></div>
<div style="left:1064px;top:974.5px;width:4.5px;height:4.5px;background:#005f99;border-radius:0.5px;"></div>
<div style="left:1214px;top:960.5px;width:4.5px;height:4.5px;background:#005f99;border-radius:0.5px;"></div>
<div style="left:1214px;top:967.5px;width:4.5px;height:4.5px;background:#005f99;border-radius:0.5px;"></div>
<div style="left:1214px;top:974.5px;width:4.5px;height:4.5px;background:#005f99;border-radius:0.5px;"></div>
<div class="t" style="left:162px;top:965.27px;font-size:11.5px;line-height:11.5px;color:#181818;font-weight:400;transform:scaleY(1.1);transform-origin:0 9.73px;">2</div>
<svg style="position:absolute;left:202px;top:963px;" width="17" height="13" viewBox="0 0 17 13"><rect x="1.5" y="1.3" width="9.7" height="2.6" fill="#005f99"/><rect x="4.2" y="5.5" width="9.4" height="2.6" fill="#005f99"/><rect x="7.3" y="9.8" width="8.7" height="2.6" fill="#005f99"/></svg>
<div class="t" style="left:224.7px;top:964.77px;font-size:11.5px;line-height:11.5px;color:#181818;font-weight:400;transform:scaleY(1.1);transform-origin:0 9.73px;">DD1</div>
<div style="left:1468px;top:924px;width:8px;height:20px;background:#d3d3d3;"></div>
<svg style="position:absolute;left:1468px;top:913px;" width="8" height="5" viewBox="0 0 8 5"><path d="M0.5 4.5L4 1L7.5 4.5" fill="none" stroke="#dcdcdc" stroke-width="1"/></svg>
<svg style="position:absolute;left:1105px;top:972px;" width="95" height="45" viewBox="0 0 95 45"><path d="M16 13.5L82.5 34.6" stroke="#f50808" stroke-width="2.7" stroke-linecap="round"/><path d="M10.3 9.9L25 10.2L22.5 18.6Z" fill="#f50808"/></svg>
<div class="t" style="left:1502px;top:671.82px;font-size:11.2px;line-height:11.2px;color:#333;font-weight:400;transform:scaleY(1.1);transform-origin:0 9.48px;">TRANSACTION</div>
<div class="t" style="left:1609.5px;top:671.90px;font-size:11.1px;line-height:11.1px;color:#333;font-weight:400;transform:scaleY(1.1);transform-origin:0 9.40px;">VENDOR</div>
<div class="t" style="left:1710px;top:671.90px;font-size:11.1px;line-height:11.1px;color:#333;font-weight:400;transform:scaleY(1.1);transform-origin:0 9.40px;">LOGS</div>
<div style="left:1497px;top:695px;width:269px;height:1px;background:#e8e8e8;"></div>
<div style="left:1497px;top:694px;width:91px;height:2px;background:#005f99;"></div>
<div class="t" style="left:1513px;top:715.59px;font-size:12.3px;line-height:12.3px;color:#333;font-weight:400;-webkit-text-stroke:0.35px #333;letter-spacing:0.2px;transform:scaleY(1.02);transform-origin:0 10.4px;">SUMMARY</div>
<div class="t" style="left:1513px;top:744.22px;font-size:11.55px;line-height:11.55px;color:#222;font-weight:400;transform:scaleY(1.1);transform-origin:0 9.78px;">Created on 12/07/2020 10:43 PM by test</div>
<div class="t" style="left:1513px;top:764.22px;font-size:11.55px;line-height:11.55px;color:#222;font-weight:400;transform:scaleY(1.1);transform-origin:0 9.78px;">Last edited on 12/07/2020 10:43 PM by test</div>
<div style="left:1497px;top:794px;width:269px;height:2px;background:#ebebeb;"></div>
<div class="t" style="left:1505.5px;top:806.93px;font-size:11.9px;line-height:11.9px;color:#333;font-weight:400;-webkit-text-stroke:0.35px #333;transform:scaleY(1.04);transform-origin:0 10.1px;">RELATED DOCUMENTS</div>
<div class="t" style="left:1505.5px;top:829.81px;font-size:11.8px;line-height:11.8px;color:#555;font-weight:400;transform:scaleY(1.1);transform-origin:0 9.99px;-webkit-text-stroke:0.45px #555;">306 Vendor Card</div>
<div class="t" style="left:1510px;top:851.37px;font-size:10.9px;line-height:10.9px;color:#777;font-weight:400;transform:scaleY(1.1);transform-origin:0 9.23px;">12/04/2020</div>
<div class="t" style="left:1572.4px;top:850.61px;font-size:11.8px;line-height:11.8px;color:#1466a0;font-weight:400;transform:scaleY(1.1);transform-origin:0 9.99px;">PO-0012636</div>
<div class="t" style="left:1362px;width:400px;text-align:right;top:851.29px;font-size:11.0px;line-height:11.0px;color:#222;font-weight:400;transform:scaleY(1.1);transform-origin:0 9.31px;">$-6,960.00</div>
<div class="t" style="left:1505.5px;top:869.91px;font-size:11.8px;line-height:11.8px;color:#555;font-weight:400;transform:scaleY(1.1);transform-origin:0 9.99px;-webkit-text-stroke:0.45px #555;">306 Vendor Card</div>
<div class="t" style="left:1510px;top:891.47px;font-size:10.9px;line-height:10.9px;color:#777;font-weight:400;transform:scaleY(1.1);transform-origin:0 9.23px;">12/03/2020</div>
<div class="t" style="left:1572.4px;top:890.71px;font-size:11.8px;line-height:11.8px;color:#1466a0;font-weight:400;transform:scaleY(1.1);transform-origin:0 9.99px;">B-0012636-A</div>
<div class="t" style="left:1362px;width:400px;text-align:right;top:891.39px;font-size:11.0px;line-height:11.0px;color:#222;font-weight:400;transform:scaleY(1.1);transform-origin:0 9.31px;">$-2,352.00</div>
<div class="t" style="left:1505.5px;top:910.01px;font-size:11.8px;line-height:11.8px;color:#555;font-weight:400;transform:scaleY(1.1);transform-origin:0 9.99px;-webkit-text-stroke:0.45px #555;">96 parent Drive</div>
<div class="t" style="left:1510px;top:931.57px;font-size:10.9px;line-height:10.9px;color:#777;font-weight:400;transform:scaleY(1.1);transform-origin:0 9.23px;">10/19/2022</div>
<div class="t" style="left:1572.4px;top:930.81px;font-size:11.8px;line-height:11.8px;color:#1466a0;font-weight:400;transform:scaleY(1.1);transform-origin:0 9.99px;">I-0026837</div>
<div class="t" style="left:1362px;width:400px;text-align:right;top:931.49px;font-size:11.0px;line-height:11.0px;color:#222;font-weight:400;transform:scaleY(1.1);transform-origin:0 9.31px;">$130.65</div>
<div class="t" style="left:1505.5px;top:950.11px;font-size:11.8px;line-height:11.8px;color:#555;font-weight:400;transform:scaleY(1.1);transform-origin:0 9.99px;-webkit-text-stroke:0.45px #555;">Bedding Hospitality</div>
<div class="t" style="left:1510px;top:971.67px;font-size:10.9px;line-height:10.9px;color:#777;font-weight:400;transform:scaleY(1.1);transform-origin:0 9.23px;">01/10/2021</div>
<div class="t" style="left:1572.4px;top:970.91px;font-size:11.8px;line-height:11.8px;color:#1466a0;font-weight:400;transform:scaleY(1.1);transform-origin:0 9.99px;">I-0026673</div>
<div class="t" style="left:1362px;width:400px;text-align:right;top:971.59px;font-size:11.0px;line-height:11.0px;color:#222;font-weight:400;transform:scaleY(1.1);transform-origin:0 9.31px;">$130.65</div>
<div class="t" style="left:1505.5px;top:990.21px;font-size:11.8px;line-height:11.8px;color:#555;font-weight:400;transform:scaleY(1.1);transform-origin:0 9.99px;-webkit-text-stroke:0.45px #555;">Walk-in</div>
<div class="t" style="left:1510px;top:1011.77px;font-size:10.9px;line-height:10.9px;color:#777;font-weight:400;transform:scaleY(1.1);transform-origin:0 9.23px;">05/23/2022</div>
<div class="t" style="left:1572.4px;top:1011.01px;font-size:11.8px;line-height:11.8px;color:#1466a0;font-weight:400;transform:scaleY(1.1);transform-origin:0 9.99px;">I-0028539</div>
<div class="t" style="left:1362px;width:400px;text-align:right;top:1011.69px;font-size:11.0px;line-height:11.0px;color:#222;font-weight:400;transform:scaleY(1.1);transform-origin:0 9.31px;">$10.89</div>
</body></html>
